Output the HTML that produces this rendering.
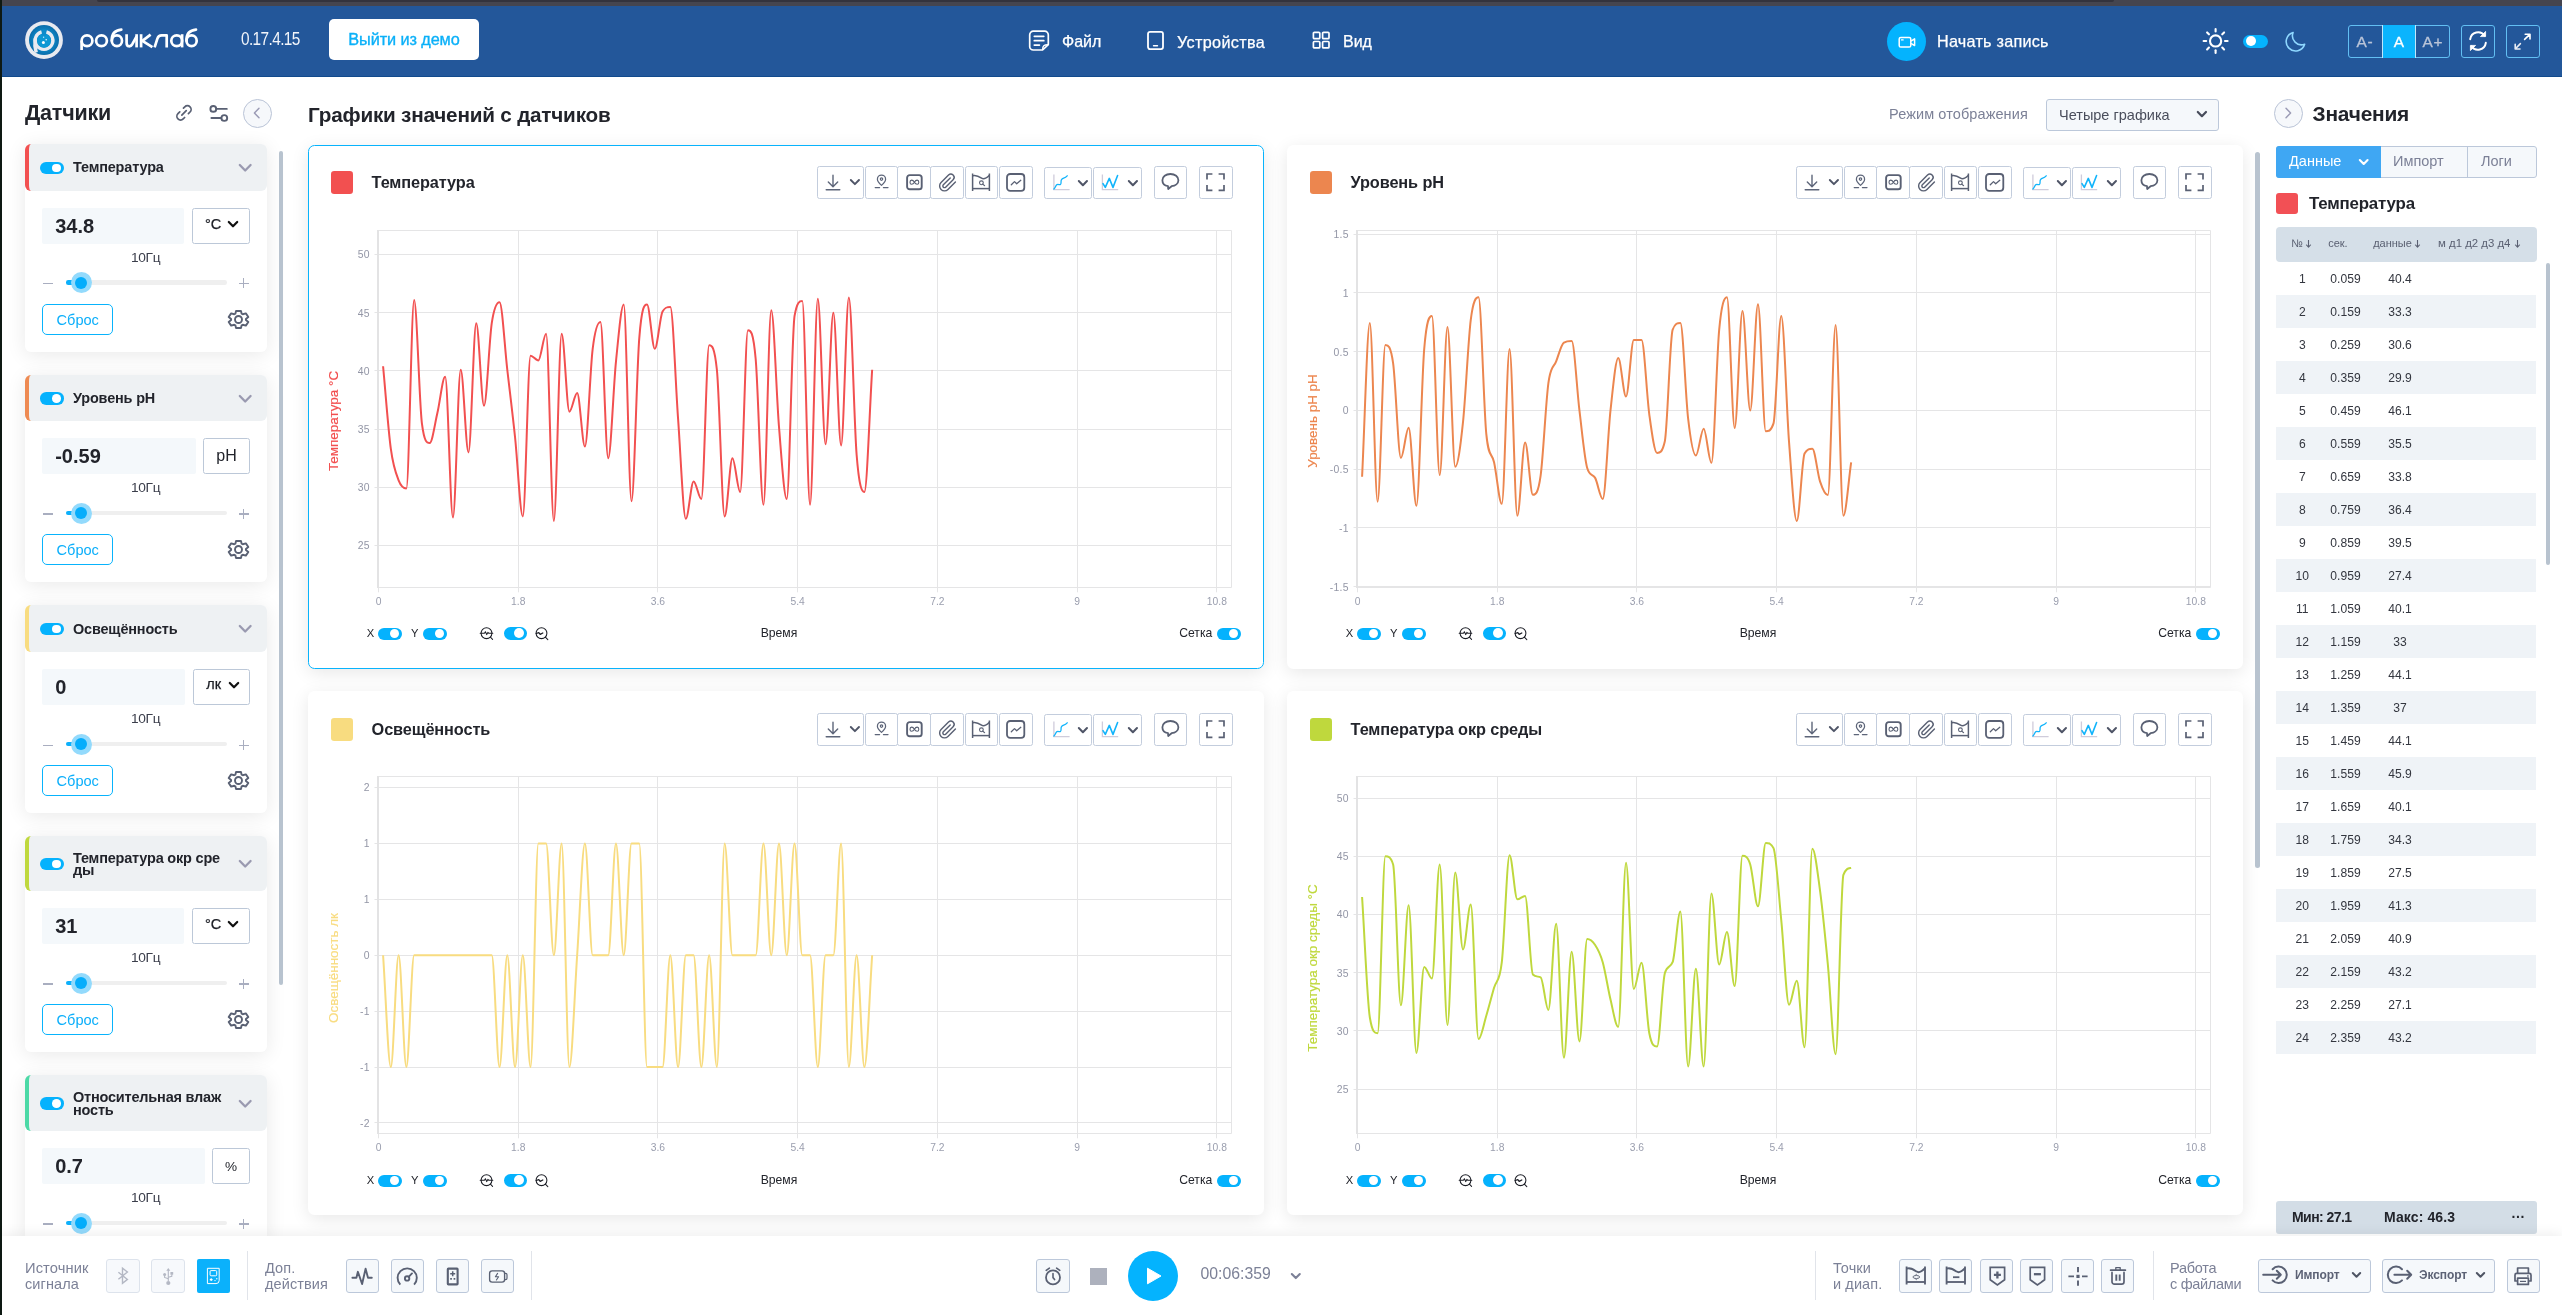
<!DOCTYPE html><html lang="ru"><head><meta charset="utf-8"><title>Робиклаб</title>
<style>

html,body{margin:0;padding:0;overflow:hidden;}
html{width:2562px;height:1315px;}
body{width:2562px;height:1315px;position:relative;overflow:hidden;background:#fff;font-family:"Liberation Sans", sans-serif;color:#22242b;}
div{box-sizing:border-box;}
.btn{position:absolute;background:#f5f8fb;border:1px solid #bcc8da;border-radius:3px;}
.tb{background:#fff;border-color:#c3cddd;border-radius:2.5px;}
.card{position:absolute;background:#fff;border-radius:6.5px;box-shadow:0 4px 18px rgba(0,0,0,0.095);}

</style></head><body><div id="root" style="position:absolute;left:0;top:0;width:2562px;height:1315px;overflow:hidden;will-change:transform;">
<div style="position:absolute;left:0px;top:0px;width:2562px;height:6px;background:#45454f;"></div>
<div style="position:absolute;left:97px;top:0px;width:2017px;height:2px;background:#33333d;border-radius:0 0 6px 6px;"></div>
<div style="position:absolute;left:0px;top:0px;width:2px;height:1315px;background:#0e1913;"></div>
<div style="position:absolute;left:2px;top:6px;width:2560px;height:71px;background:#23579a;border-bottom:1px solid #114a8c;"></div>
<svg style="position:absolute;left:25px;top:21px;overflow:visible" width="38" height="38" viewBox="0 0 38 38" fill="none"><defs><radialGradient id="lg" cx="50%" cy="50%" r="50%"><stop offset="0.55" stop-color="#0d8ccb"/><stop offset="1" stop-color="#0a6dab"/></radialGradient></defs><circle cx="19" cy="19.1" r="18.9" fill="#e8eaf0"/><circle cx="19" cy="19.1" r="15" fill="url(#lg)"/><path d="M21.45 10.84 A8.9 8.9 0 1 1 16.55 10.84" stroke="#e8eaf0" stroke-width="3.3" fill="none"/><path d="M10.3 17.5 C9.6 22 9.8 27 11.2 31.6" stroke="#e8eaf0" stroke-width="3.5" fill="none"/><circle cx="19" cy="19.9" r="6.9" fill="#0e98d4"/><rect x="17.2" y="8.6" width="3.6" height="6" fill="#0d8ccb"/><circle cx="18.4" cy="21.6" r="1.5" fill="#fff"/><circle cx="21.2" cy="18.8" r="0.8" fill="#e6f6ff"/><circle cx="18.6" cy="16.2" r="0.7" fill="#bfe6fb"/></svg>
<svg style="position:absolute;left:76px;top:24px;overflow:visible" width="128" height="32" viewBox="0 0 128 32" fill="none"><g stroke="#fff" stroke-width="2.7" fill="none"><ellipse cx="11.0" cy="16.75" rx="5.4" ry="5.4"/><path d="M5.6 16.75 V26" stroke-linecap="butt"/><ellipse cx="25.5" cy="16.75" rx="5.4" ry="5.4"/><ellipse cx="40.9" cy="16.75" rx="5.1" ry="5.4"/><path d="M35.8 16.75 C35.6 9.5 38.5 6.2 45.3 5.6" stroke-linecap="round"/><path d="M50.6 10.2 V18.8 C50.6 23.4 54.6 23 56.3 20.2 L60.6 12.5" stroke-linejoin="round"/><path d="M60.6 10.2 V23.4"/><path d="M65.1 10.2 V23.4"/><path d="M74.6 10.6 L66.4 16.8 L76.4 23.2" stroke-linejoin="round"/><path d="M78.6 23.4 L81.4 14.6 C82.3 12 83.4 11.4 85.6 11.4 H90.7 V23.4" stroke-linejoin="round"/><ellipse cx="100.7" cy="16.75" rx="5.4" ry="5.4"/><path d="M106.1 10.2 V23.4"/><ellipse cx="115.6" cy="16.75" rx="5.1" ry="5.4"/><path d="M110.5 16.75 C110.3 9.5 113.2 6.2 120 5.6" stroke-linecap="round"/></g></svg>
<div style="position:absolute;top:25.9px;height:26px;line-height:26px;font-size:17.6px;font-weight:400;color:#f2f5fa;white-space:nowrap;letter-spacing:-0.7px;left:241px;transform:scaleX(0.875);transform-origin:left center;">0.17.4.15</div>
<div style="position:absolute;left:329px;top:19px;width:150px;height:41px;background:#fff;border-radius:5px;"></div>
<div style="position:absolute;top:27.2px;height:24px;line-height:24px;font-size:16.3px;font-weight:400;color:#0bb0f8;white-space:nowrap;letter-spacing:-0.1px;left:-96px;width:1000px;text-align:center;-webkit-text-stroke:0.35px #0bb0f8;">Выйти из демо</div>
<svg style="position:absolute;left:1028px;top:29px;overflow:visible" width="22" height="23" viewBox="0 0 22 23" fill="none"><path d="M5.3 2.2 H16.7 A3.6 3.6 0 0 1 20.3 5.8 V15.6 L14.6 21 H5.3 A3.6 3.6 0 0 1 1.7 17.4 V5.8 A3.6 3.6 0 0 1 5.3 2.2 Z" stroke="#fff" stroke-width="1.7" stroke-linejoin="round"/><path d="M20.2 15.7 C16 15.6 14.6 17 14.7 20.8" stroke="#fff" stroke-width="1.5"/><path d="M6.3 7.3 H15.8 M6.3 11.7 H15.8 M6.3 16.1 H11.4" stroke="#fff" stroke-width="1.7" stroke-linecap="round"/></svg>
<div style="position:absolute;top:30.0px;height:24px;line-height:24px;font-size:16px;font-weight:400;color:#fff;white-space:nowrap;left:1062px;-webkit-text-stroke:0.25px #fff;">Файл</div>
<svg style="position:absolute;left:1145px;top:29px;overflow:visible" width="21" height="23" viewBox="0 0 21 23" fill="none"><rect x="3" y="2.9" width="15" height="17.2" rx="2" stroke="#fff" stroke-width="1.8"/><path d="M8.5 16.8 H12.5" stroke="#fff" stroke-width="1.4" stroke-linecap="round"/></svg>
<div style="position:absolute;top:30.0px;height:24px;line-height:24px;font-size:16.2px;font-weight:400;color:#fff;white-space:nowrap;letter-spacing:0.35px;left:1177px;-webkit-text-stroke:0.25px #fff;">Устройства</div>
<svg style="position:absolute;left:1311px;top:30px;overflow:visible" width="21" height="21" viewBox="0 0 21 21" fill="none"><rect x="2.4" y="2.3" width="6.4" height="6.4" rx="1" stroke="#fff" stroke-width="1.7"/><rect x="11.6" y="2.3" width="6.4" height="6.4" rx="1" stroke="#fff" stroke-width="1.7"/><rect x="2.4" y="11.5" width="6.4" height="6.4" rx="1" stroke="#fff" stroke-width="1.7"/><rect x="11.6" y="11.5" width="6.4" height="6.4" rx="1" stroke="#fff" stroke-width="1.7"/></svg>
<div style="position:absolute;top:30.0px;height:24px;line-height:24px;font-size:16px;font-weight:400;color:#fff;white-space:nowrap;left:1343px;-webkit-text-stroke:0.25px #fff;">Вид</div>
<div style="position:absolute;left:1886.8px;top:21.9px;width:39px;height:39px;background:#04b3fe;border-radius:50%;"></div>
<svg style="position:absolute;left:1898.4px;top:34.5px;overflow:visible" width="18" height="14" viewBox="0 0 18 14" fill="none"><rect x="1.2" y="2.4" width="11.6" height="9.6" rx="1.6" stroke="#fff" stroke-width="1.5"/><path d="M13 6.2 L16.6 3.9 V10.6 L13 8.3" stroke="#fff" stroke-width="1.5" stroke-linejoin="round"/><path d="M3.4 4.9 H5.2" stroke="#fff" stroke-width="1.1" stroke-linecap="round"/></svg>
<div style="position:absolute;top:29.4px;height:24px;line-height:24px;font-size:16.2px;font-weight:400;color:#fff;white-space:nowrap;letter-spacing:0.25px;left:1937px;-webkit-text-stroke:0.25px #fff;">Начать запись</div>
<svg style="position:absolute;left:2202px;top:28px;overflow:visible" width="27" height="27" viewBox="0 0 27 27" fill="none"><circle cx="13.6" cy="12.95" r="5.6" stroke="#fff" stroke-width="2.1"/><path d="M23.00 12.95 L25.60 12.95" stroke="#fff" stroke-width="2.1" stroke-linecap="round"/><path d="M20.25 19.60 L22.09 21.44" stroke="#fff" stroke-width="2.1" stroke-linecap="round"/><path d="M13.60 22.35 L13.60 24.95" stroke="#fff" stroke-width="2.1" stroke-linecap="round"/><path d="M6.95 19.60 L5.11 21.44" stroke="#fff" stroke-width="2.1" stroke-linecap="round"/><path d="M4.20 12.95 L1.60 12.95" stroke="#fff" stroke-width="2.1" stroke-linecap="round"/><path d="M6.95 6.30 L5.11 4.46" stroke="#fff" stroke-width="2.1" stroke-linecap="round"/><path d="M13.60 3.55 L13.60 0.95" stroke="#fff" stroke-width="2.1" stroke-linecap="round"/><path d="M20.25 6.30 L22.09 4.46" stroke="#fff" stroke-width="2.1" stroke-linecap="round"/></svg>
<div style="position:absolute;left:2243px;top:34.6px;width:25.2px;height:13.4px;border-radius:6.7px;background:#05b3fe;"><div style="position:absolute;left:3px;top:1.8px;width:9.8px;height:9.8px;border-radius:50%;background:#fff"></div></div>
<svg style="position:absolute;left:2285.7999999999997px;top:30.5px;overflow:visible" width="20.5" height="22.4" viewBox="0 0 22 24" fill="none"><path d="M7.6 1.6 A10.1 10.1 0 1 0 20 14.2 A9.7 9.7 0 0 1 7.6 1.6 Z" stroke="#8fd8ff" stroke-width="1.7" stroke-linejoin="round"/></svg>
<div style="position:absolute;left:2348px;top:25px;width:102px;height:33px;border:1px solid #62bff3;border-radius:3px;"></div>
<div style="position:absolute;left:2382px;top:25px;width:34px;height:33px;background:#0bb4fd;border-left:1px solid #bfe6fb;border-right:1px solid #bfe6fb;"></div>
<div style="position:absolute;top:30.3px;height:23px;line-height:23px;font-size:15.4px;font-weight:400;color:#b9c4d8;white-space:nowrap;letter-spacing:0.7px;left:1865px;width:1000px;text-align:center;-webkit-text-stroke:0.3px #b9c4d8;">A-</div>
<div style="position:absolute;top:30.3px;height:23px;line-height:23px;font-size:15.4px;font-weight:400;color:#fff;white-space:nowrap;left:1898.8000000000002px;width:1000px;text-align:center;-webkit-text-stroke:0.3px #fff;">A</div>
<div style="position:absolute;top:30.3px;height:23px;line-height:23px;font-size:15.4px;font-weight:400;color:#b9c4d8;white-space:nowrap;letter-spacing:0.7px;left:1932.8000000000002px;width:1000px;text-align:center;-webkit-text-stroke:0.3px #b9c4d8;">A+</div>
<div style="position:absolute;left:2461px;top:25px;width:34px;height:33px;border:1px solid #62bff3;border-radius:3px;"></div>
<svg style="position:absolute;left:2467px;top:30px;overflow:visible" width="22" height="22" viewBox="0 0 22 22" fill="none"><path d="M3.2 9.2 A8 8 0 0 1 17.6 5.6" stroke="#fff" stroke-width="2" stroke-linecap="round"/><path d="M18.6 1.4 V6.6 H13.4 Z" fill="#fff" stroke="#fff" stroke-width="0.8" stroke-linejoin="round"/><path d="M18.8 12.8 A8 8 0 0 1 4.4 16.4" stroke="#fff" stroke-width="2" stroke-linecap="round"/><path d="M3.4 20.6 V15.4 H8.6 Z" fill="#fff" stroke="#fff" stroke-width="0.8" stroke-linejoin="round"/></svg>
<div style="position:absolute;left:2506px;top:25px;width:34px;height:33px;border:1px solid #62bff3;border-radius:3px;"></div>
<svg style="position:absolute;left:2514px;top:33px;overflow:visible" width="17" height="17" viewBox="0 0 17 17" fill="none"><path d="M10.6 6.4 L15.8 1.4 M11.2 1.2 H16 V6" stroke="#fff" stroke-width="1.6" stroke-linecap="round" stroke-linejoin="round"/><path d="M6.4 10.6 L1.4 15.8 M1.2 11.2 V16 H6" stroke="#e8ecf4" stroke-width="1.6" stroke-linecap="round" stroke-linejoin="round"/></svg>
<div style="position:absolute;top:97.0px;height:32px;line-height:32px;font-size:21.5px;font-weight:700;color:#22242b;white-space:nowrap;letter-spacing:-0.2px;left:25px;">Датчики</div>
<svg style="position:absolute;left:175.2px;top:104.0px;overflow:visible" width="18" height="18" viewBox="0 0 20 20" fill="none"><g stroke="#596073" stroke-width="1.9" stroke-linecap="round" fill="none"><path d="M9.4 4.6 L10.9 3.1 A4.1 4.1 0 0 1 16.7 8.9 L14.9 10.7"/><path d="M10.7 15 L9.1 16.6 A4.1 4.1 0 0 1 3.3 10.8 L5.3 8.8"/><path d="M7.6 12.3 L12.5 7.4"/></g></svg>
<svg style="position:absolute;left:208px;top:103px;overflow:visible" width="22" height="20" viewBox="0 0 22 20" fill="none"><g stroke="#596073" stroke-width="1.9" stroke-linecap="round" fill="none"><circle cx="5.3" cy="5.9" r="2.9"/><path d="M8.3 5.9 H18.8"/><circle cx="16.3" cy="15" r="2.9"/><path d="M3.4 15 H13.3"/></g></svg>
<div style="position:absolute;left:243px;top:98.8px;width:29px;height:29px;border-radius:50%;border:1px solid #b9c3d6;background:#f6f8fb;"></div>
<svg style="position:absolute;left:249px;top:105px;" width="16" height="16" viewBox="0 0 16 16" fill="none"><path d="M10 3.2 L5.4 8 L10 12.8" stroke="#9c9cb6" stroke-width="1.5" stroke-linecap="round" stroke-linejoin="round"/></svg>
<div style="position:absolute;top:100.0px;height:30px;line-height:30px;font-size:20.7px;font-weight:700;color:#22242b;white-space:nowrap;letter-spacing:-0.2px;left:308px;">Графики значений с датчиков</div>
<div style="position:absolute;top:103.0px;height:22px;line-height:22px;font-size:14.5px;font-weight:400;color:#7c8197;white-space:nowrap;letter-spacing:0.1px;left:1889px;">Режим отображения</div>
<div class="btn" style="left:2046px;top:99px;width:173px;height:32px;"></div>
<div style="position:absolute;top:103.5px;height:22px;line-height:22px;font-size:14.5px;font-weight:400;color:#4a4e5c;white-space:nowrap;left:2059px;">Четыре графика</div>
<svg style="position:absolute;left:2197.2px;top:111.3px;overflow:visible" width="9.8" height="6.9" viewBox="0 0 9.8 6.9" fill="none"><path d="M0.8 1 L4.90 5.20 L9.00 1" stroke="#474c5b" stroke-width="2.2" stroke-linecap="round" stroke-linejoin="round"/></svg>
<div style="position:absolute;left:2273.7px;top:98.8px;width:29px;height:29px;border-radius:50%;border:1px solid #b9c3d6;background:#f6f8fb;"></div>
<svg style="position:absolute;left:2280px;top:105px;" width="16" height="16" viewBox="0 0 16 16" fill="none"><path d="M6 3.2 L10.6 8 L6 12.8" stroke="#9c9cb6" stroke-width="1.5" stroke-linecap="round" stroke-linejoin="round"/></svg>
<div style="position:absolute;top:97.5px;height:31px;line-height:31px;font-size:20.9px;font-weight:700;color:#22242b;white-space:nowrap;letter-spacing:-0.2px;left:2312.5px;">Значения</div>
<div style="position:absolute;left:2px;top:76px;width:300px;height:1160px;overflow:hidden;"><div style="position:absolute;left:-2px;top:-76px;">
<div class="card" style="left:25px;top:144px;width:242px;height:207.5px;border-radius:6px;box-shadow:0 3px 20px rgba(0,0,0,0.09);"></div><div style="position:absolute;left:25px;top:144px;width:242px;height:46.7px;border-radius:6px;background:#eef1f3;border-left:4px solid #f25050;"></div><div style="position:absolute;left:40px;top:161.65px;width:24px;height:12.5px;border-radius:6.25px;background:#05b2fd;"><div style="position:absolute;right:3.0px;top:1.9px;width:8.7px;height:8.7px;border-radius:50%;background:#fff;"></div></div><div style="position:absolute;top:156.3px;height:22px;line-height:22px;font-size:14.45px;font-weight:700;color:#22242b;white-space:nowrap;letter-spacing:-0.15px;left:73px;">Температура</div><svg style="position:absolute;left:239.0px;top:164.15px;overflow:visible" width="12.4" height="8.2" viewBox="0 0 12.4 8.2" fill="none"><path d="M0.8 1 L6.20 6.50 L11.60 1" stroke="#9a9ab0" stroke-width="2.3" stroke-linecap="round" stroke-linejoin="round"/></svg><div style="position:absolute;left:42px;top:208.1px;width:142px;height:35.6px;background:#f4f8fb;border-radius:2px;"></div><div style="position:absolute;top:210.7px;height:30px;line-height:30px;font-size:20px;font-weight:700;color:#22242b;white-space:nowrap;left:55.2px;">34.8</div><div style="position:absolute;left:192px;top:208.1px;width:58px;height:35.6px;background:#fff;border:1px solid #bcc8d8;border-radius:2.5px;"></div><div style="position:absolute;top:212.5px;height:22px;line-height:22px;font-size:14.5px;font-weight:400;color:#1c1e25;white-space:nowrap;left:205px;-webkit-text-stroke:0.25px #1c1e25;">°C</div><svg style="position:absolute;left:228px;top:221.1px;overflow:visible" width="10" height="7.0" viewBox="0 0 10 7.0" fill="none"><path d="M0.8 1 L5.00 5.30 L9.20 1" stroke="#111" stroke-width="2.2" stroke-linecap="round" stroke-linejoin="round"/></svg><div style="position:absolute;top:246.9px;height:21px;line-height:21px;font-size:13.7px;font-weight:400;color:#3b3e4b;white-space:nowrap;letter-spacing:-0.3px;left:-354.4px;width:1000px;text-align:center;">10Гц</div><div style="position:absolute;left:42.8px;top:282.7px;width:10px;height:1.3px;background:#a9aec0;"></div><div style="position:absolute;left:238.6px;top:282.7px;width:10.3px;height:1.3px;background:#a9aec0;"></div><div style="position:absolute;left:243.1px;top:277.9px;width:1.3px;height:10.5px;background:#a9aec0;"></div><div style="position:absolute;left:66px;top:280.09999999999997px;width:161px;height:4.6px;background:#efefef;border-radius:2.3px;"></div><div style="position:absolute;left:66px;top:280.09999999999997px;width:15px;height:4.6px;background:#0bb0fc;border-radius:2.3px;"></div><div style="position:absolute;left:70.5px;top:272.09999999999997px;width:21px;height:21px;background:#93dafc;border-radius:50%;"></div><div style="position:absolute;left:75px;top:276.59999999999997px;width:12px;height:12px;background:#05adfb;border-radius:50%;"></div><div style="position:absolute;left:42px;top:304.3px;width:71px;height:31px;border:1.3px solid #08b3fc;border-radius:5px;background:#fff;"></div><div style="position:absolute;top:309.0px;height:22px;line-height:22px;font-size:14.6px;font-weight:400;color:#0aaefa;white-space:nowrap;left:-422.3px;width:1000px;text-align:center;">Сброс</div><svg style="position:absolute;left:226.9px;top:307.90000000000003px;overflow:visible" width="23" height="23" viewBox="0 0 23 23" fill="none"><path d="M14.64 5.70 L13.97 2.96 L9.03 2.96 L8.36 5.70 L7.24 6.26 L4.16 5.39 L1.69 9.07 L4.10 10.94 L4.10 12.06 L1.69 13.93 L4.16 17.61 L7.24 16.74 L8.36 17.30 L9.03 20.04 L13.97 20.04 L14.64 17.30 L15.76 16.74 L18.84 17.61 L21.31 13.93 L18.90 12.06 L18.90 10.94 L21.31 9.07 L18.84 5.39 L15.76 6.26 Z" stroke="#596073" stroke-width="1.9" stroke-linejoin="round"/><circle cx="11.5" cy="11.5" r="3.5" stroke="#596073" stroke-width="1.9"/></svg>
<div class="card" style="left:25px;top:374.6px;width:242px;height:207.5px;border-radius:6px;box-shadow:0 3px 20px rgba(0,0,0,0.09);"></div><div style="position:absolute;left:25px;top:374.6px;width:242px;height:46.7px;border-radius:6px;background:#eef1f3;border-left:4px solid #ee8a52;"></div><div style="position:absolute;left:40px;top:392.25000000000006px;width:24px;height:12.5px;border-radius:6.25px;background:#05b2fd;"><div style="position:absolute;right:3.0px;top:1.9px;width:8.7px;height:8.7px;border-radius:50%;background:#fff;"></div></div><div style="position:absolute;top:387.0px;height:22px;line-height:22px;font-size:14.45px;font-weight:700;color:#22242b;white-space:nowrap;letter-spacing:-0.15px;left:73px;">Уровень pH</div><svg style="position:absolute;left:239.0px;top:394.75000000000006px;overflow:visible" width="12.4" height="8.2" viewBox="0 0 12.4 8.2" fill="none"><path d="M0.8 1 L6.20 6.50 L11.60 1" stroke="#9a9ab0" stroke-width="2.3" stroke-linecap="round" stroke-linejoin="round"/></svg><div style="position:absolute;left:42px;top:438.1px;width:153.5px;height:35.6px;background:#f4f8fb;border-radius:2px;"></div><div style="position:absolute;top:440.7px;height:30px;line-height:30px;font-size:20px;font-weight:700;color:#22242b;white-space:nowrap;left:55.2px;">-0.59</div><div style="position:absolute;left:203px;top:438.1px;width:47px;height:35.6px;background:#fff;border:1px solid #bcc8d8;border-radius:2.5px;"></div><div style="position:absolute;top:444.1px;height:24px;line-height:24px;font-size:16px;font-weight:400;color:#22242b;white-space:nowrap;left:-273.5px;width:1000px;text-align:center;">pH</div><div style="position:absolute;top:477.2px;height:21px;line-height:21px;font-size:13.7px;font-weight:400;color:#3b3e4b;white-space:nowrap;letter-spacing:-0.3px;left:-354.4px;width:1000px;text-align:center;">10Гц</div><div style="position:absolute;left:42.8px;top:513.4px;width:10px;height:1.3px;background:#a9aec0;"></div><div style="position:absolute;left:238.6px;top:513.4px;width:10.3px;height:1.3px;background:#a9aec0;"></div><div style="position:absolute;left:243.1px;top:508.6px;width:1.3px;height:10.5px;background:#a9aec0;"></div><div style="position:absolute;left:66px;top:510.8px;width:161px;height:4.6px;background:#efefef;border-radius:2.3px;"></div><div style="position:absolute;left:66px;top:510.8px;width:15px;height:4.6px;background:#0bb0fc;border-radius:2.3px;"></div><div style="position:absolute;left:70.5px;top:502.8px;width:21px;height:21px;background:#93dafc;border-radius:50%;"></div><div style="position:absolute;left:75px;top:507.3px;width:12px;height:12px;background:#05adfb;border-radius:50%;"></div><div style="position:absolute;left:42px;top:534.3000000000001px;width:71px;height:31px;border:1.3px solid #08b3fc;border-radius:5px;background:#fff;"></div><div style="position:absolute;top:539.0px;height:22px;line-height:22px;font-size:14.6px;font-weight:400;color:#0aaefa;white-space:nowrap;left:-422.3px;width:1000px;text-align:center;">Сброс</div><svg style="position:absolute;left:226.9px;top:537.9000000000001px;overflow:visible" width="23" height="23" viewBox="0 0 23 23" fill="none"><path d="M14.64 5.70 L13.97 2.96 L9.03 2.96 L8.36 5.70 L7.24 6.26 L4.16 5.39 L1.69 9.07 L4.10 10.94 L4.10 12.06 L1.69 13.93 L4.16 17.61 L7.24 16.74 L8.36 17.30 L9.03 20.04 L13.97 20.04 L14.64 17.30 L15.76 16.74 L18.84 17.61 L21.31 13.93 L18.90 12.06 L18.90 10.94 L21.31 9.07 L18.84 5.39 L15.76 6.26 Z" stroke="#596073" stroke-width="1.9" stroke-linejoin="round"/><circle cx="11.5" cy="11.5" r="3.5" stroke="#596073" stroke-width="1.9"/></svg>
<div class="card" style="left:25px;top:605.2px;width:242px;height:207.5px;border-radius:6px;box-shadow:0 3px 20px rgba(0,0,0,0.09);"></div><div style="position:absolute;left:25px;top:605.2px;width:242px;height:46.7px;border-radius:6px;background:#eef1f3;border-left:4px solid #f8dc80;"></div><div style="position:absolute;left:40px;top:622.85px;width:24px;height:12.5px;border-radius:6.25px;background:#05b2fd;"><div style="position:absolute;right:3.0px;top:1.9px;width:8.7px;height:8.7px;border-radius:50%;background:#fff;"></div></div><div style="position:absolute;top:617.6px;height:22px;line-height:22px;font-size:14.45px;font-weight:700;color:#22242b;white-space:nowrap;letter-spacing:-0.15px;left:73px;">Освещённость</div><svg style="position:absolute;left:239.0px;top:625.35px;overflow:visible" width="12.4" height="8.2" viewBox="0 0 12.4 8.2" fill="none"><path d="M0.8 1 L6.20 6.50 L11.60 1" stroke="#9a9ab0" stroke-width="2.3" stroke-linecap="round" stroke-linejoin="round"/></svg><div style="position:absolute;left:42px;top:669px;width:143px;height:35.6px;background:#f4f8fb;border-radius:2px;"></div><div style="position:absolute;top:671.6px;height:30px;line-height:30px;font-size:20px;font-weight:700;color:#22242b;white-space:nowrap;left:55.2px;">0</div><div style="position:absolute;left:193.3px;top:669px;width:56.7px;height:35.6px;background:#fff;border:1px solid #bcc8d8;border-radius:2.5px;"></div><div style="position:absolute;top:673.4px;height:22px;line-height:22px;font-size:14.5px;font-weight:400;color:#1c1e25;white-space:nowrap;left:206.3px;-webkit-text-stroke:0.25px #1c1e25;">лк</div><svg style="position:absolute;left:229.3px;top:682px;overflow:visible" width="10" height="7.0" viewBox="0 0 10 7.0" fill="none"><path d="M0.8 1 L5.00 5.30 L9.20 1" stroke="#111" stroke-width="2.2" stroke-linecap="round" stroke-linejoin="round"/></svg><div style="position:absolute;top:708.3px;height:21px;line-height:21px;font-size:13.7px;font-weight:400;color:#3b3e4b;white-space:nowrap;letter-spacing:-0.3px;left:-354.4px;width:1000px;text-align:center;">10Гц</div><div style="position:absolute;left:42.8px;top:744.4999999999999px;width:10px;height:1.3px;background:#a9aec0;"></div><div style="position:absolute;left:238.6px;top:744.4999999999999px;width:10.3px;height:1.3px;background:#a9aec0;"></div><div style="position:absolute;left:243.1px;top:739.6999999999999px;width:1.3px;height:10.5px;background:#a9aec0;"></div><div style="position:absolute;left:66px;top:741.9px;width:161px;height:4.6px;background:#efefef;border-radius:2.3px;"></div><div style="position:absolute;left:66px;top:741.9px;width:15px;height:4.6px;background:#0bb0fc;border-radius:2.3px;"></div><div style="position:absolute;left:70.5px;top:733.9px;width:21px;height:21px;background:#93dafc;border-radius:50%;"></div><div style="position:absolute;left:75px;top:738.4px;width:12px;height:12px;background:#05adfb;border-radius:50%;"></div><div style="position:absolute;left:42px;top:765.2px;width:71px;height:31px;border:1.3px solid #08b3fc;border-radius:5px;background:#fff;"></div><div style="position:absolute;top:769.9px;height:22px;line-height:22px;font-size:14.6px;font-weight:400;color:#0aaefa;white-space:nowrap;left:-422.3px;width:1000px;text-align:center;">Сброс</div><svg style="position:absolute;left:226.9px;top:768.8000000000001px;overflow:visible" width="23" height="23" viewBox="0 0 23 23" fill="none"><path d="M14.64 5.70 L13.97 2.96 L9.03 2.96 L8.36 5.70 L7.24 6.26 L4.16 5.39 L1.69 9.07 L4.10 10.94 L4.10 12.06 L1.69 13.93 L4.16 17.61 L7.24 16.74 L8.36 17.30 L9.03 20.04 L13.97 20.04 L14.64 17.30 L15.76 16.74 L18.84 17.61 L21.31 13.93 L18.90 12.06 L18.90 10.94 L21.31 9.07 L18.84 5.39 L15.76 6.26 Z" stroke="#596073" stroke-width="1.9" stroke-linejoin="round"/><circle cx="11.5" cy="11.5" r="3.5" stroke="#596073" stroke-width="1.9"/></svg>
<div class="card" style="left:25px;top:835.8px;width:242px;height:216.5px;border-radius:6px;box-shadow:0 3px 20px rgba(0,0,0,0.09);"></div><div style="position:absolute;left:25px;top:835.8px;width:242px;height:55.5px;border-radius:6px;background:#eef1f3;border-left:4px solid #bfd83d;"></div><div style="position:absolute;left:40px;top:857.8499999999999px;width:24px;height:12.5px;border-radius:6.25px;background:#05b2fd;"><div style="position:absolute;right:3.0px;top:1.9px;width:8.7px;height:8.7px;border-radius:50%;background:#fff;"></div></div><div style="position:absolute;top:846.6px;height:22px;line-height:22px;font-size:14.5px;font-weight:700;color:#22242b;white-space:nowrap;letter-spacing:-0.2px;left:73px;">Температура окр сре</div><div style="position:absolute;top:859.1px;height:22px;line-height:22px;font-size:14.5px;font-weight:700;color:#22242b;white-space:nowrap;letter-spacing:-0.2px;left:73px;">ды</div><svg style="position:absolute;left:239.0px;top:860.3499999999999px;overflow:visible" width="12.4" height="8.2" viewBox="0 0 12.4 8.2" fill="none"><path d="M0.8 1 L6.20 6.50 L11.60 1" stroke="#9a9ab0" stroke-width="2.3" stroke-linecap="round" stroke-linejoin="round"/></svg><div style="position:absolute;left:42px;top:908.2px;width:142px;height:35.6px;background:#f4f8fb;border-radius:2px;"></div><div style="position:absolute;top:910.8px;height:30px;line-height:30px;font-size:20px;font-weight:700;color:#22242b;white-space:nowrap;left:55.2px;">31</div><div style="position:absolute;left:192px;top:908.2px;width:58px;height:35.6px;background:#fff;border:1px solid #bcc8d8;border-radius:2.5px;"></div><div style="position:absolute;top:912.6px;height:22px;line-height:22px;font-size:14.5px;font-weight:400;color:#1c1e25;white-space:nowrap;left:205px;-webkit-text-stroke:0.25px #1c1e25;">°C</div><svg style="position:absolute;left:228px;top:921.2px;overflow:visible" width="10" height="7.0" viewBox="0 0 10 7.0" fill="none"><path d="M0.8 1 L5.00 5.30 L9.20 1" stroke="#111" stroke-width="2.2" stroke-linecap="round" stroke-linejoin="round"/></svg><div style="position:absolute;top:947.3px;height:21px;line-height:21px;font-size:13.7px;font-weight:400;color:#3b3e4b;white-space:nowrap;letter-spacing:-0.3px;left:-354.4px;width:1000px;text-align:center;">10Гц</div><div style="position:absolute;left:42.8px;top:983.4px;width:10px;height:1.3px;background:#a9aec0;"></div><div style="position:absolute;left:238.6px;top:983.4px;width:10.3px;height:1.3px;background:#a9aec0;"></div><div style="position:absolute;left:243.1px;top:978.6px;width:1.3px;height:10.5px;background:#a9aec0;"></div><div style="position:absolute;left:66px;top:980.8000000000001px;width:161px;height:4.6px;background:#efefef;border-radius:2.3px;"></div><div style="position:absolute;left:66px;top:980.8000000000001px;width:15px;height:4.6px;background:#0bb0fc;border-radius:2.3px;"></div><div style="position:absolute;left:70.5px;top:972.8000000000001px;width:21px;height:21px;background:#93dafc;border-radius:50%;"></div><div style="position:absolute;left:75px;top:977.3000000000001px;width:12px;height:12px;background:#05adfb;border-radius:50%;"></div><div style="position:absolute;left:42px;top:1004.4000000000001px;width:71px;height:31px;border:1.3px solid #08b3fc;border-radius:5px;background:#fff;"></div><div style="position:absolute;top:1009.1px;height:22px;line-height:22px;font-size:14.6px;font-weight:400;color:#0aaefa;white-space:nowrap;left:-422.3px;width:1000px;text-align:center;">Сброс</div><svg style="position:absolute;left:226.9px;top:1008.0000000000001px;overflow:visible" width="23" height="23" viewBox="0 0 23 23" fill="none"><path d="M14.64 5.70 L13.97 2.96 L9.03 2.96 L8.36 5.70 L7.24 6.26 L4.16 5.39 L1.69 9.07 L4.10 10.94 L4.10 12.06 L1.69 13.93 L4.16 17.61 L7.24 16.74 L8.36 17.30 L9.03 20.04 L13.97 20.04 L14.64 17.30 L15.76 16.74 L18.84 17.61 L21.31 13.93 L18.90 12.06 L18.90 10.94 L21.31 9.07 L18.84 5.39 L15.76 6.26 Z" stroke="#596073" stroke-width="1.9" stroke-linejoin="round"/><circle cx="11.5" cy="11.5" r="3.5" stroke="#596073" stroke-width="1.9"/></svg>
<div class="card" style="left:25px;top:1075.2px;width:242px;height:164.79999999999995px;border-radius:6px;box-shadow:0 3px 20px rgba(0,0,0,0.09);border-bottom-left-radius:0;border-bottom-right-radius:0;"></div><div style="position:absolute;left:25px;top:1075.2px;width:242px;height:55.5px;border-radius:6px;background:#eef1f3;border-left:4px solid #4cd9a6;"></div><div style="position:absolute;left:40px;top:1097.25px;width:24px;height:12.5px;border-radius:6.25px;background:#05b2fd;"><div style="position:absolute;right:3.0px;top:1.9px;width:8.7px;height:8.7px;border-radius:50%;background:#fff;"></div></div><div style="position:absolute;top:1086.0px;height:22px;line-height:22px;font-size:14.5px;font-weight:700;color:#22242b;white-space:nowrap;letter-spacing:-0.2px;left:73px;">Относительная влаж</div><div style="position:absolute;top:1098.5px;height:22px;line-height:22px;font-size:14.5px;font-weight:700;color:#22242b;white-space:nowrap;letter-spacing:-0.2px;left:73px;">ность</div><svg style="position:absolute;left:239.0px;top:1099.75px;overflow:visible" width="12.4" height="8.2" viewBox="0 0 12.4 8.2" fill="none"><path d="M0.8 1 L6.20 6.50 L11.60 1" stroke="#9a9ab0" stroke-width="2.3" stroke-linecap="round" stroke-linejoin="round"/></svg><div style="position:absolute;left:42px;top:1148.1px;width:163px;height:35.6px;background:#f4f8fb;border-radius:2px;"></div><div style="position:absolute;top:1150.7px;height:30px;line-height:30px;font-size:20px;font-weight:700;color:#22242b;white-space:nowrap;left:55.2px;">0.7</div><div style="position:absolute;left:212px;top:1148.1px;width:38px;height:35.6px;background:#fff;border:1px solid #bcc8d8;border-radius:2.5px;"></div><div style="position:absolute;top:1156.4px;height:21px;line-height:21px;font-size:13.6px;font-weight:400;color:#22242b;white-space:nowrap;left:-269.0px;width:1000px;text-align:center;">%</div><div style="position:absolute;top:1187.2px;height:21px;line-height:21px;font-size:13.7px;font-weight:400;color:#3b3e4b;white-space:nowrap;letter-spacing:-0.3px;left:-354.4px;width:1000px;text-align:center;">10Гц</div><div style="position:absolute;left:42.8px;top:1223.2999999999997px;width:10px;height:1.3px;background:#a9aec0;"></div><div style="position:absolute;left:238.6px;top:1223.2999999999997px;width:10.3px;height:1.3px;background:#a9aec0;"></div><div style="position:absolute;left:243.1px;top:1218.4999999999998px;width:1.3px;height:10.5px;background:#a9aec0;"></div><div style="position:absolute;left:66px;top:1220.6999999999998px;width:161px;height:4.6px;background:#efefef;border-radius:2.3px;"></div><div style="position:absolute;left:66px;top:1220.6999999999998px;width:15px;height:4.6px;background:#0bb0fc;border-radius:2.3px;"></div><div style="position:absolute;left:70.5px;top:1212.6999999999998px;width:21px;height:21px;background:#93dafc;border-radius:50%;"></div><div style="position:absolute;left:75px;top:1217.1999999999998px;width:12px;height:12px;background:#05adfb;border-radius:50%;"></div><div style="position:absolute;left:42px;top:1244.3px;width:71px;height:31px;border:1.3px solid #08b3fc;border-radius:5px;background:#fff;"></div><div style="position:absolute;top:1249.0px;height:22px;line-height:22px;font-size:14.6px;font-weight:400;color:#0aaefa;white-space:nowrap;left:-422.3px;width:1000px;text-align:center;">Сброс</div><svg style="position:absolute;left:226.9px;top:1247.8999999999999px;overflow:visible" width="23" height="23" viewBox="0 0 23 23" fill="none"><path d="M14.64 5.70 L13.97 2.96 L9.03 2.96 L8.36 5.70 L7.24 6.26 L4.16 5.39 L1.69 9.07 L4.10 10.94 L4.10 12.06 L1.69 13.93 L4.16 17.61 L7.24 16.74 L8.36 17.30 L9.03 20.04 L13.97 20.04 L14.64 17.30 L15.76 16.74 L18.84 17.61 L21.31 13.93 L18.90 12.06 L18.90 10.94 L21.31 9.07 L18.84 5.39 L15.76 6.26 Z" stroke="#596073" stroke-width="1.9" stroke-linejoin="round"/><circle cx="11.5" cy="11.5" r="3.5" stroke="#596073" stroke-width="1.9"/></svg>
</div></div>
<div style="position:absolute;left:278.5px;top:151px;width:4.5px;height:834px;background:#b8c3cf;border-radius:2.5px;"></div>
<div class="card" style="left:308px;top:145px;width:956px;height:524px;"><div style="position:absolute;left:0;top:0;width:956px;height:524px;border:1.4px solid #08b3fc;border-radius:6.5px;height:524px;"></div><div style="position:absolute;left:23.1px;top:26.1px;width:22px;height:23px;border-radius:3.2px;background:#f25050;"></div><div style="position:absolute;top:24.6px;height:24px;line-height:24px;font-size:16.3px;font-weight:700;color:#22242b;white-space:nowrap;letter-spacing:-0.1px;left:63.6px;">Температура</div><div class="btn tb" style="left:509.3px;top:21.2px;width:47px;height:32.4px;"></div><div class="btn tb" style="left:557.3px;top:21.2px;width:33px;height:32.4px;"></div><div class="btn tb" style="left:589.3px;top:21.2px;width:34px;height:32.4px;"></div><div class="btn tb" style="left:622.3px;top:21.2px;width:34px;height:32.4px;"></div><div class="btn tb" style="left:657.3px;top:21.2px;width:33px;height:32.4px;"></div><div class="btn tb" style="left:691.3px;top:21.2px;width:33.5px;height:32.4px;"></div><div class="btn tb" style="left:736.3px;top:22.3px;width:48px;height:31.299999999999997px;"></div><div class="btn tb" style="left:785.3px;top:22.3px;width:49px;height:31.299999999999997px;"></div><div class="btn tb" style="left:845.8px;top:21.2px;width:33.5px;height:32.4px;"></div><div class="btn tb" style="left:891.3px;top:21.2px;width:33.5px;height:32.4px;"></div><svg style="position:absolute;left:516.6px;top:28.5px;overflow:visible" width="16" height="17" viewBox="0 0 16 17" fill="none"><g stroke="#5d6579" stroke-width="1.4" stroke-linecap="round" stroke-linejoin="round"><path d="M8 1.2 V12.6 M3.3 8 L8 12.7 L12.7 8 M1.2 15.8 H14.8"/></g></svg><svg style="position:absolute;left:542.2px;top:34.4px;overflow:visible" width="9.8" height="6.9" viewBox="0 0 9.8 6.9" fill="none"><path d="M0.8 1 L4.90 5.20 L9.00 1" stroke="#4f5567" stroke-width="1.9" stroke-linecap="round" stroke-linejoin="round"/></svg><svg style="position:absolute;left:566px;top:29.2px;overflow:visible" width="15" height="15" viewBox="0 0 15 15" fill="none"><g stroke="#5d6579" stroke-width="1.25" stroke-linecap="round" stroke-linejoin="round"><path d="M7.5 11.4 C4.6 8.8 3.4 7 3.4 5.2 A4.1 4.1 0 0 1 11.6 5.2 C11.6 7 10.4 8.8 7.5 11.4 Z"/><circle cx="7.5" cy="5.1" r="1.2"/><path d="M1.2 13.6 H5.6 M9.4 13.6 H14"/></g></svg><svg style="position:absolute;left:598.2px;top:29.1px;overflow:visible" width="17" height="17" viewBox="0 0 17 17" fill="none"><rect x="1.1" y="1.1" width="14.6" height="14.2" rx="2.6" stroke="#596073" stroke-width="1.9"/><path d="M8.4 8.2 C6.8 5.4 4 5.4 4 8.2 C4 11 6.8 11 8.4 8.2 C10 5.4 12.8 5.4 12.8 8.2 C12.8 11 10 11 8.4 8.2 Z" stroke="#596073" stroke-width="1.1"/></svg><svg style="position:absolute;left:630.1px;top:27.7px;overflow:visible" width="19.5" height="19.5" viewBox="0 0 24 24" fill="none"><path d="M21.44 11.05l-9.19 9.19a6 6 0 0 1-8.49-8.49l9.19-9.19a4 4 0 0 1 5.66 5.66l-9.2 9.19a2 2 0 0 1-2.83-2.83l8.49-8.48" stroke="#596073" stroke-width="1.75" stroke-linecap="round" stroke-linejoin="round" fill="none"/></svg><svg style="position:absolute;left:663.3px;top:27.9px;overflow:visible" width="20" height="19" viewBox="0 0 20 19" fill="none"><g stroke="#596073" stroke-width="1.5" fill="none" stroke-linecap="butt"><path d="M1.6 0.4 V18 M18.4 0.4 V18"/><path d="M1.6 2.8 C5 1.6 7.6 3.2 10.6 5.2 C12.6 6.4 15 5.6 18.4 2.2"/><path d="M1.6 15.6 H18.4"/></g><circle cx="10.4" cy="9.8" r="1.9" stroke="#596073" stroke-width="1.1"/><path d="M11.8 11.2 L13.6 12.6" stroke="#596073" stroke-width="1.2" stroke-linecap="round"/></svg><svg style="position:absolute;left:698.3px;top:27.8px;overflow:visible" width="20" height="20" viewBox="0 0 20 20" fill="none"><rect x="1.0" y="1.0" width="17.3" height="16.9" rx="3.2" stroke="#596073" stroke-width="1.8"/><path d="M5.3 11.8 L8.5 8.6 L10.7 10.8 L14.8 7.3" stroke="#596073" stroke-width="1.3" stroke-linecap="round" stroke-linejoin="round"/></svg><svg style="position:absolute;left:743.5px;top:28.8px;overflow:visible" width="18" height="17" viewBox="0 0 18 17" fill="none"><path d="M1.9 0.6 V15.6 H17.6" stroke="#cfccdb" stroke-width="1.3"/><path d="M1.9 15 C3.4 13.8 3.6 11.4 5 10.6 C6.6 9.8 7.4 11.4 8.6 10.2 C9.8 8.8 8.2 6.6 9.8 5.2 C11.4 3.8 12.8 4.6 15.2 1.8" stroke="#12b4fb" stroke-width="1.3" stroke-linecap="round" fill="none"/></svg><svg style="position:absolute;left:770.4px;top:35.3px;overflow:visible" width="9.8" height="6.9" viewBox="0 0 9.8 6.9" fill="none"><path d="M0.8 1 L4.90 5.20 L9.00 1" stroke="#4f5567" stroke-width="2.0" stroke-linecap="round" stroke-linejoin="round"/></svg><svg style="position:absolute;left:793.1px;top:28.8px;overflow:visible" width="18" height="17" viewBox="0 0 18 17" fill="none"><path d="M1.4 0.6 V15.6 H17.2" stroke="#cfccdb" stroke-width="1.3"/><path d="M2 9.6 L4.3 13.4 L8.3 4.4 L12 13.4 L16.6 1.5" stroke="#12b4fb" stroke-width="1.6" stroke-linecap="round" stroke-linejoin="round" fill="none"/></svg><svg style="position:absolute;left:820.3px;top:35.3px;overflow:visible" width="9.8" height="6.9" viewBox="0 0 9.8 6.9" fill="none"><path d="M0.8 1 L4.90 5.20 L9.00 1" stroke="#4f5567" stroke-width="2.0" stroke-linecap="round" stroke-linejoin="round"/></svg><svg style="position:absolute;left:852px;top:28px;overflow:visible" width="20" height="17" viewBox="0 0 20 17" fill="none"><path d="M10.4 1 C15 1 18.4 3.6 18.4 7.2 C18.4 10.6 15.2 12.8 11.6 13.2 L8.2 16 L8 13.1 C4.6 12.6 2.4 10.2 2.4 7.2 C2.4 3.6 5.8 1 10.4 1 Z" stroke="#596073" stroke-width="1.8" stroke-linejoin="round"/></svg><svg style="position:absolute;left:897.7px;top:27.7px;overflow:visible" width="19" height="19" viewBox="0 0 19 19" fill="none"><g stroke="#596073" stroke-width="1.7" fill="none"><path d="M1 6.4 V1 H6.4 M12.6 1 H18 V6.4 M18 12 V17.4 H12.6 M6.4 17.4 H1 V12"/></g></svg><svg style="position:absolute;left:0px;top:0px" width="956" height="526" viewBox="0 0 956 526" fill="none"><path d="M66.50 109.50 H923.50" stroke="#e5e5e6" stroke-width="1"/><path d="M66.50 167.50 H923.50" stroke="#e5e5e6" stroke-width="1"/><path d="M66.50 225.50 H923.50" stroke="#e5e5e6" stroke-width="1"/><path d="M66.50 284.50 H923.50" stroke="#e5e5e6" stroke-width="1"/><path d="M66.50 342.50 H923.50" stroke="#e5e5e6" stroke-width="1"/><path d="M66.50 400.50 H923.50" stroke="#e5e5e6" stroke-width="1"/><path d="M70.50 85.50 V447.30" stroke="#e5e5e6" stroke-width="1"/><path d="M210.50 85.50 V447.30" stroke="#e5e5e6" stroke-width="1"/><path d="M349.50 85.50 V447.30" stroke="#e5e5e6" stroke-width="1"/><path d="M489.50 85.50 V447.30" stroke="#e5e5e6" stroke-width="1"/><path d="M629.50 85.50 V447.30" stroke="#e5e5e6" stroke-width="1"/><path d="M769.50 85.50 V447.30" stroke="#e5e5e6" stroke-width="1"/><path d="M908.50 85.50 V447.30" stroke="#e5e5e6" stroke-width="1"/><path d="M923.50 85.50 V442.50" stroke="#e5e5e6" stroke-width="1"/><path d="M70.50 85.50 H923.50" stroke="#e5e5e6" stroke-width="1"/><path d="M70.50 442.50 H923.50" stroke="#e5e5e6" stroke-width="1"/><path d="M70.00 85.00 V443.00" stroke="#e3e3e4" stroke-width="2"/><path d="M75.08 221.24C77.67 248.79 80.26 284.88 82.84 303.89C85.43 322.90 88.02 328.72 90.61 335.32C93.19 341.91 95.78 343.46 98.37 343.46C100.96 343.46 103.54 154.90 106.13 154.90C108.72 154.90 111.31 258.49 113.90 278.28C116.48 298.07 119.07 298.07 121.66 298.07C124.25 298.07 126.83 278.86 129.42 267.80C132.01 256.75 134.60 231.72 137.18 231.72C139.77 231.72 142.36 372.56 144.95 372.56C147.53 372.56 150.12 224.74 152.71 224.74C155.30 224.74 157.89 307.38 160.47 307.38C163.06 307.38 165.65 178.18 168.24 178.18C170.82 178.18 173.41 260.82 176.00 260.82C178.59 260.82 181.17 195.44 183.76 178.18C186.35 160.91 188.94 157.22 191.53 157.22C194.11 157.22 196.70 202.23 199.29 224.74C201.88 247.24 204.46 267.80 207.05 292.25C209.64 316.69 212.23 371.40 214.81 371.40C217.40 371.40 219.99 210.77 222.58 210.77C225.16 210.77 227.75 215.42 230.34 215.42C232.93 215.42 235.52 188.65 238.10 188.65C240.69 188.65 243.28 376.06 245.87 376.06C248.45 376.06 251.04 188.65 253.63 188.65C256.22 188.65 258.80 266.64 261.39 266.64C263.98 266.64 266.57 248.02 269.16 248.02C271.74 248.02 274.33 301.56 276.92 301.56C279.51 301.56 282.09 224.54 284.68 203.78C287.27 183.03 289.86 177.01 292.44 177.01C295.03 177.01 297.62 313.20 300.21 313.20C302.79 313.20 305.38 242.20 307.97 216.59C310.56 190.98 313.15 159.55 315.73 159.55C318.32 159.55 320.91 356.27 323.50 356.27C326.08 356.27 328.67 226.09 331.26 193.31C333.85 160.52 336.43 159.55 339.02 159.55C341.61 159.55 344.20 203.78 346.79 203.78C349.37 203.78 351.96 171.19 354.55 166.54C357.14 161.88 359.72 161.88 362.31 161.88C364.90 161.88 367.49 238.32 370.07 273.62C372.66 308.93 375.25 373.73 377.84 373.73C380.42 373.73 383.01 336.48 385.60 336.48C388.19 336.48 390.78 353.94 393.36 353.94C395.95 353.94 398.54 200.29 401.13 200.29C403.71 200.29 406.30 200.29 408.89 224.74C411.48 249.18 414.06 371.40 416.65 371.40C419.24 371.40 421.83 313.20 424.42 313.20C427.00 313.20 429.59 346.96 432.18 346.96C434.77 346.96 437.35 185.16 439.94 185.16C442.53 185.16 445.12 185.16 447.70 214.26C450.29 243.36 452.88 359.76 455.47 359.76C458.05 359.76 460.64 165.37 463.23 165.37C465.82 165.37 468.41 250.34 470.99 281.77C473.58 313.20 476.17 353.94 478.76 353.94C481.34 353.94 483.93 186.32 486.52 171.19C489.11 156.06 491.69 156.06 494.28 156.06C496.87 156.06 499.46 359.76 502.05 359.76C504.63 359.76 507.22 153.73 509.81 153.73C512.40 153.73 514.98 299.23 517.57 299.23C520.16 299.23 522.75 167.70 525.33 167.70C527.92 167.70 530.51 300.40 533.10 300.40C535.68 300.40 538.27 152.57 540.86 152.57C543.45 152.57 546.04 277.31 548.62 309.71C551.21 342.11 553.80 346.96 556.39 346.96C558.97 346.96 561.56 265.48 564.15 224.74" stroke="#f25050" stroke-width="2.0" fill="none" stroke-linejoin="round" stroke-linecap="butt"/></svg><div style="position:absolute;top:102.3px;height:16px;line-height:16px;font-size:10.4px;font-weight:400;color:#9396a6;white-space:nowrap;letter-spacing:0.25px;left:-538.3px;width:600px;text-align:right;">50</div><div style="position:absolute;top:160.5px;height:16px;line-height:16px;font-size:10.4px;font-weight:400;color:#9396a6;white-space:nowrap;letter-spacing:0.25px;left:-538.3px;width:600px;text-align:right;">45</div><div style="position:absolute;top:218.7px;height:16px;line-height:16px;font-size:10.4px;font-weight:400;color:#9396a6;white-space:nowrap;letter-spacing:0.25px;left:-538.3px;width:600px;text-align:right;">40</div><div style="position:absolute;top:276.9px;height:16px;line-height:16px;font-size:10.4px;font-weight:400;color:#9396a6;white-space:nowrap;letter-spacing:0.25px;left:-538.3px;width:600px;text-align:right;">35</div><div style="position:absolute;top:335.1px;height:16px;line-height:16px;font-size:10.4px;font-weight:400;color:#9396a6;white-space:nowrap;letter-spacing:0.25px;left:-538.3px;width:600px;text-align:right;">30</div><div style="position:absolute;top:393.3px;height:16px;line-height:16px;font-size:10.4px;font-weight:400;color:#9396a6;white-space:nowrap;letter-spacing:0.25px;left:-538.3px;width:600px;text-align:right;">25</div><div style="position:absolute;top:448.9px;height:16px;line-height:16px;font-size:10.3px;font-weight:400;color:#9a9eae;white-space:nowrap;left:-229.5px;width:600px;text-align:center;">0</div><div style="position:absolute;top:448.9px;height:16px;line-height:16px;font-size:10.3px;font-weight:400;color:#9a9eae;white-space:nowrap;left:-89.76599999999999px;width:600px;text-align:center;">1.8</div><div style="position:absolute;top:448.9px;height:16px;line-height:16px;font-size:10.3px;font-weight:400;color:#9a9eae;white-space:nowrap;left:49.96800000000002px;width:600px;text-align:center;">3.6</div><div style="position:absolute;top:448.9px;height:16px;line-height:16px;font-size:10.3px;font-weight:400;color:#9a9eae;white-space:nowrap;left:189.702px;width:600px;text-align:center;">5.4</div><div style="position:absolute;top:448.9px;height:16px;line-height:16px;font-size:10.3px;font-weight:400;color:#9a9eae;white-space:nowrap;left:329.43600000000004px;width:600px;text-align:center;">7.2</div><div style="position:absolute;top:448.9px;height:16px;line-height:16px;font-size:10.3px;font-weight:400;color:#9a9eae;white-space:nowrap;left:469.16999999999996px;width:600px;text-align:center;">9</div><div style="position:absolute;top:448.9px;height:16px;line-height:16px;font-size:10.3px;font-weight:400;color:#9a9eae;white-space:nowrap;left:608.904px;width:600px;text-align:center;">10.8</div><div style="position:absolute;left:-174px;top:266.2px;width:400px;height:20px;line-height:20px;text-align:center;font-size:13.45px;color:#f25050;transform:rotate(-90deg);white-space:nowrap;-webkit-text-stroke:0.2px #f25050;">Температура °C</div><div style="position:absolute;top:479.7px;height:17px;line-height:17px;font-size:11.2px;font-weight:400;color:#22242b;white-space:nowrap;left:58.8px;">X</div><div style="position:absolute;left:69.8px;top:482.9px;width:24.2px;height:11.9px;border-radius:5.95px;background:#05b2fd;"><div style="position:absolute;right:3.2px;top:1.5px;width:8.9px;height:8.9px;border-radius:50%;background:#fff;"></div></div><div style="position:absolute;top:479.7px;height:17px;line-height:17px;font-size:11.2px;font-weight:400;color:#22242b;white-space:nowrap;left:103px;">Y</div><div style="position:absolute;left:114.8px;top:482.9px;width:24.2px;height:11.9px;border-radius:5.95px;background:#05b2fd;"><div style="position:absolute;right:3.2px;top:1.5px;width:8.9px;height:8.9px;border-radius:50%;background:#fff;"></div></div><svg style="position:absolute;left:171px;top:481.9px;overflow:visible" width="15" height="14" viewBox="0 0 15 14" fill="none"><g stroke="#1c1e26" stroke-width="1.05" fill="none" stroke-linecap="round" stroke-linejoin="round"><circle cx="7.5" cy="6.2" r="5.4"/><path d="M1.2 6.2 H5.4 L6.4 4.8 L7.7 7.6 L8.9 5.4 L9.6 6.2 H13.8"/><path d="M11.4 10.2 L13.6 12.4"/></g></svg><div style="position:absolute;left:196px;top:481.7px;width:23.1px;height:13.2px;border-radius:6.6px;background:#05b2fd;"><div style="position:absolute;right:3.2px;top:1.5px;width:10.2px;height:10.2px;border-radius:50%;background:#fff;"></div></div><svg style="position:absolute;left:227px;top:481.9px;overflow:visible" width="14" height="14" viewBox="0 0 14 14" fill="none"><g stroke="#1c1e26" stroke-width="1.05" fill="none" stroke-linecap="round" stroke-linejoin="round"><circle cx="6.5" cy="6.2" r="5.4"/><path d="M1.2 6.5 L3.8 5.6 L5.2 7.4 L7.8 6.0" stroke-width="1.3"/><path d="M10.4 10.2 L12.8 12.6"/></g></svg><div style="position:absolute;top:478.9px;height:19px;line-height:19px;font-size:12.2px;font-weight:400;color:#22242b;white-space:nowrap;left:171px;width:600px;text-align:center;">Время</div><div style="position:absolute;top:478.9px;height:19px;line-height:19px;font-size:12.2px;font-weight:400;color:#22242b;white-space:nowrap;left:871.2px;">Сетка</div><div style="position:absolute;left:909px;top:482.9px;width:24.2px;height:11.9px;border-radius:5.95px;background:#05b2fd;"><div style="position:absolute;right:3.2px;top:1.5px;width:8.9px;height:8.9px;border-radius:50%;background:#fff;"></div></div></div>
<div class="card" style="left:1287px;top:145px;width:956px;height:524px;"><div style="position:absolute;left:23.1px;top:26.1px;width:22px;height:23px;border-radius:3.2px;background:#ec864f;"></div><div style="position:absolute;top:24.6px;height:24px;line-height:24px;font-size:16.3px;font-weight:700;color:#22242b;white-space:nowrap;letter-spacing:-0.1px;left:63.6px;">Уровень pH</div><div class="btn tb" style="left:509.3px;top:21.2px;width:47px;height:32.4px;"></div><div class="btn tb" style="left:557.3px;top:21.2px;width:33px;height:32.4px;"></div><div class="btn tb" style="left:589.3px;top:21.2px;width:34px;height:32.4px;"></div><div class="btn tb" style="left:622.3px;top:21.2px;width:34px;height:32.4px;"></div><div class="btn tb" style="left:657.3px;top:21.2px;width:33px;height:32.4px;"></div><div class="btn tb" style="left:691.3px;top:21.2px;width:33.5px;height:32.4px;"></div><div class="btn tb" style="left:736.3px;top:22.3px;width:48px;height:31.299999999999997px;"></div><div class="btn tb" style="left:785.3px;top:22.3px;width:49px;height:31.299999999999997px;"></div><div class="btn tb" style="left:845.8px;top:21.2px;width:33.5px;height:32.4px;"></div><div class="btn tb" style="left:891.3px;top:21.2px;width:33.5px;height:32.4px;"></div><svg style="position:absolute;left:516.6px;top:28.5px;overflow:visible" width="16" height="17" viewBox="0 0 16 17" fill="none"><g stroke="#5d6579" stroke-width="1.4" stroke-linecap="round" stroke-linejoin="round"><path d="M8 1.2 V12.6 M3.3 8 L8 12.7 L12.7 8 M1.2 15.8 H14.8"/></g></svg><svg style="position:absolute;left:542.2px;top:34.4px;overflow:visible" width="9.8" height="6.9" viewBox="0 0 9.8 6.9" fill="none"><path d="M0.8 1 L4.90 5.20 L9.00 1" stroke="#4f5567" stroke-width="1.9" stroke-linecap="round" stroke-linejoin="round"/></svg><svg style="position:absolute;left:566px;top:29.2px;overflow:visible" width="15" height="15" viewBox="0 0 15 15" fill="none"><g stroke="#5d6579" stroke-width="1.25" stroke-linecap="round" stroke-linejoin="round"><path d="M7.5 11.4 C4.6 8.8 3.4 7 3.4 5.2 A4.1 4.1 0 0 1 11.6 5.2 C11.6 7 10.4 8.8 7.5 11.4 Z"/><circle cx="7.5" cy="5.1" r="1.2"/><path d="M1.2 13.6 H5.6 M9.4 13.6 H14"/></g></svg><svg style="position:absolute;left:598.2px;top:29.1px;overflow:visible" width="17" height="17" viewBox="0 0 17 17" fill="none"><rect x="1.1" y="1.1" width="14.6" height="14.2" rx="2.6" stroke="#596073" stroke-width="1.9"/><path d="M8.4 8.2 C6.8 5.4 4 5.4 4 8.2 C4 11 6.8 11 8.4 8.2 C10 5.4 12.8 5.4 12.8 8.2 C12.8 11 10 11 8.4 8.2 Z" stroke="#596073" stroke-width="1.1"/></svg><svg style="position:absolute;left:630.1px;top:27.7px;overflow:visible" width="19.5" height="19.5" viewBox="0 0 24 24" fill="none"><path d="M21.44 11.05l-9.19 9.19a6 6 0 0 1-8.49-8.49l9.19-9.19a4 4 0 0 1 5.66 5.66l-9.2 9.19a2 2 0 0 1-2.83-2.83l8.49-8.48" stroke="#596073" stroke-width="1.75" stroke-linecap="round" stroke-linejoin="round" fill="none"/></svg><svg style="position:absolute;left:663.3px;top:27.9px;overflow:visible" width="20" height="19" viewBox="0 0 20 19" fill="none"><g stroke="#596073" stroke-width="1.5" fill="none" stroke-linecap="butt"><path d="M1.6 0.4 V18 M18.4 0.4 V18"/><path d="M1.6 2.8 C5 1.6 7.6 3.2 10.6 5.2 C12.6 6.4 15 5.6 18.4 2.2"/><path d="M1.6 15.6 H18.4"/></g><circle cx="10.4" cy="9.8" r="1.9" stroke="#596073" stroke-width="1.1"/><path d="M11.8 11.2 L13.6 12.6" stroke="#596073" stroke-width="1.2" stroke-linecap="round"/></svg><svg style="position:absolute;left:698.3px;top:27.8px;overflow:visible" width="20" height="20" viewBox="0 0 20 20" fill="none"><rect x="1.0" y="1.0" width="17.3" height="16.9" rx="3.2" stroke="#596073" stroke-width="1.8"/><path d="M5.3 11.8 L8.5 8.6 L10.7 10.8 L14.8 7.3" stroke="#596073" stroke-width="1.3" stroke-linecap="round" stroke-linejoin="round"/></svg><svg style="position:absolute;left:743.5px;top:28.8px;overflow:visible" width="18" height="17" viewBox="0 0 18 17" fill="none"><path d="M1.9 0.6 V15.6 H17.6" stroke="#cfccdb" stroke-width="1.3"/><path d="M1.9 15 C3.4 13.8 3.6 11.4 5 10.6 C6.6 9.8 7.4 11.4 8.6 10.2 C9.8 8.8 8.2 6.6 9.8 5.2 C11.4 3.8 12.8 4.6 15.2 1.8" stroke="#12b4fb" stroke-width="1.3" stroke-linecap="round" fill="none"/></svg><svg style="position:absolute;left:770.4px;top:35.3px;overflow:visible" width="9.8" height="6.9" viewBox="0 0 9.8 6.9" fill="none"><path d="M0.8 1 L4.90 5.20 L9.00 1" stroke="#4f5567" stroke-width="2.0" stroke-linecap="round" stroke-linejoin="round"/></svg><svg style="position:absolute;left:793.1px;top:28.8px;overflow:visible" width="18" height="17" viewBox="0 0 18 17" fill="none"><path d="M1.4 0.6 V15.6 H17.2" stroke="#cfccdb" stroke-width="1.3"/><path d="M2 9.6 L4.3 13.4 L8.3 4.4 L12 13.4 L16.6 1.5" stroke="#12b4fb" stroke-width="1.6" stroke-linecap="round" stroke-linejoin="round" fill="none"/></svg><svg style="position:absolute;left:820.3px;top:35.3px;overflow:visible" width="9.8" height="6.9" viewBox="0 0 9.8 6.9" fill="none"><path d="M0.8 1 L4.90 5.20 L9.00 1" stroke="#4f5567" stroke-width="2.0" stroke-linecap="round" stroke-linejoin="round"/></svg><svg style="position:absolute;left:852px;top:28px;overflow:visible" width="20" height="17" viewBox="0 0 20 17" fill="none"><path d="M10.4 1 C15 1 18.4 3.6 18.4 7.2 C18.4 10.6 15.2 12.8 11.6 13.2 L8.2 16 L8 13.1 C4.6 12.6 2.4 10.2 2.4 7.2 C2.4 3.6 5.8 1 10.4 1 Z" stroke="#596073" stroke-width="1.8" stroke-linejoin="round"/></svg><svg style="position:absolute;left:897.7px;top:27.7px;overflow:visible" width="19" height="19" viewBox="0 0 19 19" fill="none"><g stroke="#596073" stroke-width="1.7" fill="none"><path d="M1 6.4 V1 H6.4 M12.6 1 H18 V6.4 M18 12 V17.4 H12.6 M6.4 17.4 H1 V12"/></g></svg><svg style="position:absolute;left:0px;top:0px" width="956" height="526" viewBox="0 0 956 526" fill="none"><path d="M66.50 89.50 H923.50" stroke="#e5e5e6" stroke-width="1"/><path d="M66.50 147.50 H923.50" stroke="#e5e5e6" stroke-width="1"/><path d="M66.50 206.50 H923.50" stroke="#e5e5e6" stroke-width="1"/><path d="M66.50 265.50 H923.50" stroke="#e5e5e6" stroke-width="1"/><path d="M66.50 324.50 H923.50" stroke="#e5e5e6" stroke-width="1"/><path d="M66.50 382.50 H923.50" stroke="#e5e5e6" stroke-width="1"/><path d="M66.50 441.50 H923.50" stroke="#e5e5e6" stroke-width="1"/><path d="M70.50 85.50 V447.30" stroke="#e5e5e6" stroke-width="1"/><path d="M210.50 85.50 V447.30" stroke="#e5e5e6" stroke-width="1"/><path d="M349.50 85.50 V447.30" stroke="#e5e5e6" stroke-width="1"/><path d="M489.50 85.50 V447.30" stroke="#e5e5e6" stroke-width="1"/><path d="M629.50 85.50 V447.30" stroke="#e5e5e6" stroke-width="1"/><path d="M769.50 85.50 V447.30" stroke="#e5e5e6" stroke-width="1"/><path d="M908.50 85.50 V447.30" stroke="#e5e5e6" stroke-width="1"/><path d="M923.50 85.50 V442.50" stroke="#e5e5e6" stroke-width="1"/><path d="M70.50 85.50 H923.50" stroke="#e5e5e6" stroke-width="1"/><path d="M70.50 442.50 H923.50" stroke="#e5e5e6" stroke-width="1"/><path d="M70.00 85.00 V443.00" stroke="#e3e3e4" stroke-width="2"/><path d="M75.08 331.72C77.67 280.45 80.26 177.91 82.84 177.91C85.43 177.91 88.02 356.75 90.61 356.75C93.19 356.75 95.78 200.00 98.37 200.00C100.96 200.00 103.54 200.00 106.13 218.45C108.72 236.90 111.31 312.92 113.90 312.92C116.48 312.92 119.07 282.84 121.66 282.84C124.25 282.84 126.83 360.86 129.42 360.86C132.01 360.86 134.60 236.00 137.18 204.35C139.77 172.70 142.36 170.98 144.95 170.98C147.53 170.98 150.12 330.07 152.71 330.07C155.30 330.07 157.89 182.03 160.47 182.03C163.06 182.03 165.65 321.85 168.24 321.85C170.82 321.85 173.41 301.68 176.00 277.20C178.59 252.72 181.17 195.79 183.76 174.97C186.35 154.16 188.94 152.30 191.53 152.30C194.11 152.30 196.70 262.99 199.29 288.95C201.88 314.91 204.46 306.14 207.05 317.15C209.64 328.16 212.23 358.86 214.81 358.86C217.40 358.86 219.99 204.00 222.58 204.00C225.16 204.00 227.75 370.73 230.34 370.73C232.93 370.73 235.52 297.53 238.10 297.53C240.69 297.53 243.28 349.81 245.87 349.81C248.45 349.81 251.04 349.29 253.63 330.66C256.22 312.04 258.80 257.13 261.39 238.07C263.98 219.02 266.57 223.07 269.16 216.34C271.74 209.60 274.33 199.18 276.92 197.65C279.51 196.12 282.09 196.12 284.68 196.12C287.27 196.12 289.86 244.30 292.44 265.45C295.03 286.60 297.62 314.27 300.21 323.02C302.79 331.78 305.38 328.63 307.97 332.66C310.56 336.69 313.15 353.93 315.73 353.93C318.32 353.93 320.91 288.93 323.50 265.45C326.08 241.97 328.67 213.05 331.26 213.05C333.85 213.05 336.43 251.47 339.02 251.47C341.61 251.47 344.20 194.95 346.79 194.95C349.37 194.95 351.96 194.95 354.55 194.95C357.14 194.95 359.72 250.72 362.31 269.56C364.90 288.40 367.49 307.99 370.07 307.99C372.66 307.99 375.25 307.99 377.84 296.24C380.42 284.49 383.01 191.78 385.60 184.84C388.19 177.91 390.78 177.91 393.36 177.91C395.95 177.91 398.54 251.57 401.13 273.68C403.71 295.78 406.30 310.57 408.89 310.57C411.48 310.57 414.06 283.78 416.65 283.78C419.24 283.78 421.83 317.86 424.42 317.86C427.00 317.86 429.59 212.44 432.18 184.84C434.77 157.25 437.35 152.30 439.94 152.30C442.53 152.30 445.12 282.96 447.70 282.96C450.29 282.96 452.88 166.05 455.47 166.05C458.05 166.05 460.64 265.45 463.23 265.45C465.82 265.45 468.41 159.23 470.99 159.23C473.58 159.23 476.17 286.37 478.76 286.37C481.34 286.37 483.93 286.37 486.52 278.38C489.11 270.39 491.69 170.98 494.28 170.98C496.87 170.98 499.46 263.00 502.05 297.18C504.63 331.35 507.22 376.02 509.81 376.02C512.40 376.02 514.98 313.39 517.57 308.57C520.16 303.75 522.75 303.75 525.33 303.75C527.92 303.75 530.51 328.94 533.10 336.65C535.68 344.37 538.27 350.05 540.86 350.05C543.45 350.05 546.04 179.91 548.62 179.91C551.21 179.91 553.80 370.73 556.39 370.73C558.97 370.73 561.56 335.09 564.15 317.27" stroke="#ec864f" stroke-width="2.0" fill="none" stroke-linejoin="round" stroke-linecap="butt"/></svg><div style="position:absolute;top:82.0px;height:16px;line-height:16px;font-size:10.4px;font-weight:400;color:#9396a6;white-space:nowrap;letter-spacing:0.25px;left:-538.3px;width:600px;text-align:right;">1.5</div><div style="position:absolute;top:140.8px;height:16px;line-height:16px;font-size:10.4px;font-weight:400;color:#9396a6;white-space:nowrap;letter-spacing:0.25px;left:-538.3px;width:600px;text-align:right;">1</div><div style="position:absolute;top:199.5px;height:16px;line-height:16px;font-size:10.4px;font-weight:400;color:#9396a6;white-space:nowrap;letter-spacing:0.25px;left:-538.3px;width:600px;text-align:right;">0.5</div><div style="position:absolute;top:258.2px;height:16px;line-height:16px;font-size:10.4px;font-weight:400;color:#9396a6;white-space:nowrap;letter-spacing:0.25px;left:-538.3px;width:600px;text-align:right;">0</div><div style="position:absolute;top:317.0px;height:16px;line-height:16px;font-size:10.4px;font-weight:400;color:#9396a6;white-space:nowrap;letter-spacing:0.25px;left:-538.3px;width:600px;text-align:right;">-0.5</div><div style="position:absolute;top:375.8px;height:16px;line-height:16px;font-size:10.4px;font-weight:400;color:#9396a6;white-space:nowrap;letter-spacing:0.25px;left:-538.3px;width:600px;text-align:right;">-1</div><div style="position:absolute;top:434.5px;height:16px;line-height:16px;font-size:10.4px;font-weight:400;color:#9396a6;white-space:nowrap;letter-spacing:0.25px;left:-538.3px;width:600px;text-align:right;">-1.5</div><div style="position:absolute;top:448.9px;height:16px;line-height:16px;font-size:10.3px;font-weight:400;color:#9a9eae;white-space:nowrap;left:-229.5px;width:600px;text-align:center;">0</div><div style="position:absolute;top:448.9px;height:16px;line-height:16px;font-size:10.3px;font-weight:400;color:#9a9eae;white-space:nowrap;left:-89.76599999999999px;width:600px;text-align:center;">1.8</div><div style="position:absolute;top:448.9px;height:16px;line-height:16px;font-size:10.3px;font-weight:400;color:#9a9eae;white-space:nowrap;left:49.96800000000002px;width:600px;text-align:center;">3.6</div><div style="position:absolute;top:448.9px;height:16px;line-height:16px;font-size:10.3px;font-weight:400;color:#9a9eae;white-space:nowrap;left:189.702px;width:600px;text-align:center;">5.4</div><div style="position:absolute;top:448.9px;height:16px;line-height:16px;font-size:10.3px;font-weight:400;color:#9a9eae;white-space:nowrap;left:329.43600000000004px;width:600px;text-align:center;">7.2</div><div style="position:absolute;top:448.9px;height:16px;line-height:16px;font-size:10.3px;font-weight:400;color:#9a9eae;white-space:nowrap;left:469.16999999999996px;width:600px;text-align:center;">9</div><div style="position:absolute;top:448.9px;height:16px;line-height:16px;font-size:10.3px;font-weight:400;color:#9a9eae;white-space:nowrap;left:608.904px;width:600px;text-align:center;">10.8</div><div style="position:absolute;left:-174px;top:266.2px;width:400px;height:20px;line-height:20px;text-align:center;font-size:13.45px;color:#ec864f;transform:rotate(-90deg);white-space:nowrap;-webkit-text-stroke:0.2px #ec864f;">Уровень pH pH</div><div style="position:absolute;top:479.7px;height:17px;line-height:17px;font-size:11.2px;font-weight:400;color:#22242b;white-space:nowrap;left:58.8px;">X</div><div style="position:absolute;left:69.8px;top:482.9px;width:24.2px;height:11.9px;border-radius:5.95px;background:#05b2fd;"><div style="position:absolute;right:3.2px;top:1.5px;width:8.9px;height:8.9px;border-radius:50%;background:#fff;"></div></div><div style="position:absolute;top:479.7px;height:17px;line-height:17px;font-size:11.2px;font-weight:400;color:#22242b;white-space:nowrap;left:103px;">Y</div><div style="position:absolute;left:114.8px;top:482.9px;width:24.2px;height:11.9px;border-radius:5.95px;background:#05b2fd;"><div style="position:absolute;right:3.2px;top:1.5px;width:8.9px;height:8.9px;border-radius:50%;background:#fff;"></div></div><svg style="position:absolute;left:171px;top:481.9px;overflow:visible" width="15" height="14" viewBox="0 0 15 14" fill="none"><g stroke="#1c1e26" stroke-width="1.05" fill="none" stroke-linecap="round" stroke-linejoin="round"><circle cx="7.5" cy="6.2" r="5.4"/><path d="M1.2 6.2 H5.4 L6.4 4.8 L7.7 7.6 L8.9 5.4 L9.6 6.2 H13.8"/><path d="M11.4 10.2 L13.6 12.4"/></g></svg><div style="position:absolute;left:196px;top:481.7px;width:23.1px;height:13.2px;border-radius:6.6px;background:#05b2fd;"><div style="position:absolute;right:3.2px;top:1.5px;width:10.2px;height:10.2px;border-radius:50%;background:#fff;"></div></div><svg style="position:absolute;left:227px;top:481.9px;overflow:visible" width="14" height="14" viewBox="0 0 14 14" fill="none"><g stroke="#1c1e26" stroke-width="1.05" fill="none" stroke-linecap="round" stroke-linejoin="round"><circle cx="6.5" cy="6.2" r="5.4"/><path d="M1.2 6.5 L3.8 5.6 L5.2 7.4 L7.8 6.0" stroke-width="1.3"/><path d="M10.4 10.2 L12.8 12.6"/></g></svg><div style="position:absolute;top:478.9px;height:19px;line-height:19px;font-size:12.2px;font-weight:400;color:#22242b;white-space:nowrap;left:171px;width:600px;text-align:center;">Время</div><div style="position:absolute;top:478.9px;height:19px;line-height:19px;font-size:12.2px;font-weight:400;color:#22242b;white-space:nowrap;left:871.2px;">Сетка</div><div style="position:absolute;left:909px;top:482.9px;width:24.2px;height:11.9px;border-radius:5.95px;background:#05b2fd;"><div style="position:absolute;right:3.2px;top:1.5px;width:8.9px;height:8.9px;border-radius:50%;background:#fff;"></div></div></div>
<div class="card" style="left:308px;top:691px;width:956px;height:524px;"><div style="position:absolute;left:23.1px;top:27.1px;width:22px;height:23px;border-radius:3.2px;background:#f8dc80;"></div><div style="position:absolute;top:25.6px;height:24px;line-height:24px;font-size:16.3px;font-weight:700;color:#22242b;white-space:nowrap;letter-spacing:-0.1px;left:63.6px;">Освещённость</div><div class="btn tb" style="left:509.3px;top:22.2px;width:47px;height:32.4px;"></div><div class="btn tb" style="left:557.3px;top:22.2px;width:33px;height:32.4px;"></div><div class="btn tb" style="left:589.3px;top:22.2px;width:34px;height:32.4px;"></div><div class="btn tb" style="left:622.3px;top:22.2px;width:34px;height:32.4px;"></div><div class="btn tb" style="left:657.3px;top:22.2px;width:33px;height:32.4px;"></div><div class="btn tb" style="left:691.3px;top:22.2px;width:33.5px;height:32.4px;"></div><div class="btn tb" style="left:736.3px;top:23.3px;width:48px;height:31.299999999999997px;"></div><div class="btn tb" style="left:785.3px;top:23.3px;width:49px;height:31.299999999999997px;"></div><div class="btn tb" style="left:845.8px;top:22.2px;width:33.5px;height:32.4px;"></div><div class="btn tb" style="left:891.3px;top:22.2px;width:33.5px;height:32.4px;"></div><svg style="position:absolute;left:516.6px;top:29.5px;overflow:visible" width="16" height="17" viewBox="0 0 16 17" fill="none"><g stroke="#5d6579" stroke-width="1.4" stroke-linecap="round" stroke-linejoin="round"><path d="M8 1.2 V12.6 M3.3 8 L8 12.7 L12.7 8 M1.2 15.8 H14.8"/></g></svg><svg style="position:absolute;left:542.2px;top:35.4px;overflow:visible" width="9.8" height="6.9" viewBox="0 0 9.8 6.9" fill="none"><path d="M0.8 1 L4.90 5.20 L9.00 1" stroke="#4f5567" stroke-width="1.9" stroke-linecap="round" stroke-linejoin="round"/></svg><svg style="position:absolute;left:566px;top:30.2px;overflow:visible" width="15" height="15" viewBox="0 0 15 15" fill="none"><g stroke="#5d6579" stroke-width="1.25" stroke-linecap="round" stroke-linejoin="round"><path d="M7.5 11.4 C4.6 8.8 3.4 7 3.4 5.2 A4.1 4.1 0 0 1 11.6 5.2 C11.6 7 10.4 8.8 7.5 11.4 Z"/><circle cx="7.5" cy="5.1" r="1.2"/><path d="M1.2 13.6 H5.6 M9.4 13.6 H14"/></g></svg><svg style="position:absolute;left:598.2px;top:30.1px;overflow:visible" width="17" height="17" viewBox="0 0 17 17" fill="none"><rect x="1.1" y="1.1" width="14.6" height="14.2" rx="2.6" stroke="#596073" stroke-width="1.9"/><path d="M8.4 8.2 C6.8 5.4 4 5.4 4 8.2 C4 11 6.8 11 8.4 8.2 C10 5.4 12.8 5.4 12.8 8.2 C12.8 11 10 11 8.4 8.2 Z" stroke="#596073" stroke-width="1.1"/></svg><svg style="position:absolute;left:630.1px;top:28.7px;overflow:visible" width="19.5" height="19.5" viewBox="0 0 24 24" fill="none"><path d="M21.44 11.05l-9.19 9.19a6 6 0 0 1-8.49-8.49l9.19-9.19a4 4 0 0 1 5.66 5.66l-9.2 9.19a2 2 0 0 1-2.83-2.83l8.49-8.48" stroke="#596073" stroke-width="1.75" stroke-linecap="round" stroke-linejoin="round" fill="none"/></svg><svg style="position:absolute;left:663.3px;top:28.9px;overflow:visible" width="20" height="19" viewBox="0 0 20 19" fill="none"><g stroke="#596073" stroke-width="1.5" fill="none" stroke-linecap="butt"><path d="M1.6 0.4 V18 M18.4 0.4 V18"/><path d="M1.6 2.8 C5 1.6 7.6 3.2 10.6 5.2 C12.6 6.4 15 5.6 18.4 2.2"/><path d="M1.6 15.6 H18.4"/></g><circle cx="10.4" cy="9.8" r="1.9" stroke="#596073" stroke-width="1.1"/><path d="M11.8 11.2 L13.6 12.6" stroke="#596073" stroke-width="1.2" stroke-linecap="round"/></svg><svg style="position:absolute;left:698.3px;top:28.8px;overflow:visible" width="20" height="20" viewBox="0 0 20 20" fill="none"><rect x="1.0" y="1.0" width="17.3" height="16.9" rx="3.2" stroke="#596073" stroke-width="1.8"/><path d="M5.3 11.8 L8.5 8.6 L10.7 10.8 L14.8 7.3" stroke="#596073" stroke-width="1.3" stroke-linecap="round" stroke-linejoin="round"/></svg><svg style="position:absolute;left:743.5px;top:29.8px;overflow:visible" width="18" height="17" viewBox="0 0 18 17" fill="none"><path d="M1.9 0.6 V15.6 H17.6" stroke="#cfccdb" stroke-width="1.3"/><path d="M1.9 15 C3.4 13.8 3.6 11.4 5 10.6 C6.6 9.8 7.4 11.4 8.6 10.2 C9.8 8.8 8.2 6.6 9.8 5.2 C11.4 3.8 12.8 4.6 15.2 1.8" stroke="#12b4fb" stroke-width="1.3" stroke-linecap="round" fill="none"/></svg><svg style="position:absolute;left:770.4px;top:36.3px;overflow:visible" width="9.8" height="6.9" viewBox="0 0 9.8 6.9" fill="none"><path d="M0.8 1 L4.90 5.20 L9.00 1" stroke="#4f5567" stroke-width="2.0" stroke-linecap="round" stroke-linejoin="round"/></svg><svg style="position:absolute;left:793.1px;top:29.8px;overflow:visible" width="18" height="17" viewBox="0 0 18 17" fill="none"><path d="M1.4 0.6 V15.6 H17.2" stroke="#cfccdb" stroke-width="1.3"/><path d="M2 9.6 L4.3 13.4 L8.3 4.4 L12 13.4 L16.6 1.5" stroke="#12b4fb" stroke-width="1.6" stroke-linecap="round" stroke-linejoin="round" fill="none"/></svg><svg style="position:absolute;left:820.3px;top:36.3px;overflow:visible" width="9.8" height="6.9" viewBox="0 0 9.8 6.9" fill="none"><path d="M0.8 1 L4.90 5.20 L9.00 1" stroke="#4f5567" stroke-width="2.0" stroke-linecap="round" stroke-linejoin="round"/></svg><svg style="position:absolute;left:852px;top:29.0px;overflow:visible" width="20" height="17" viewBox="0 0 20 17" fill="none"><path d="M10.4 1 C15 1 18.4 3.6 18.4 7.2 C18.4 10.6 15.2 12.8 11.6 13.2 L8.2 16 L8 13.1 C4.6 12.6 2.4 10.2 2.4 7.2 C2.4 3.6 5.8 1 10.4 1 Z" stroke="#596073" stroke-width="1.8" stroke-linejoin="round"/></svg><svg style="position:absolute;left:897.7px;top:28.7px;overflow:visible" width="19" height="19" viewBox="0 0 19 19" fill="none"><g stroke="#596073" stroke-width="1.7" fill="none"><path d="M1 6.4 V1 H6.4 M12.6 1 H18 V6.4 M18 12 V17.4 H12.6 M6.4 17.4 H1 V12"/></g></svg><svg style="position:absolute;left:0px;top:0px" width="956" height="526" viewBox="0 0 956 526" fill="none"><path d="M66.50 96.50 H923.50" stroke="#e5e5e6" stroke-width="1"/><path d="M66.50 152.50 H923.50" stroke="#e5e5e6" stroke-width="1"/><path d="M66.50 208.50 H923.50" stroke="#e5e5e6" stroke-width="1"/><path d="M66.50 264.50 H923.50" stroke="#e5e5e6" stroke-width="1"/><path d="M66.50 320.50 H923.50" stroke="#e5e5e6" stroke-width="1"/><path d="M66.50 376.50 H923.50" stroke="#e5e5e6" stroke-width="1"/><path d="M66.50 431.50 H923.50" stroke="#e5e5e6" stroke-width="1"/><path d="M70.50 85.50 V447.30" stroke="#e5e5e6" stroke-width="1"/><path d="M210.50 85.50 V447.30" stroke="#e5e5e6" stroke-width="1"/><path d="M349.50 85.50 V447.30" stroke="#e5e5e6" stroke-width="1"/><path d="M489.50 85.50 V447.30" stroke="#e5e5e6" stroke-width="1"/><path d="M629.50 85.50 V447.30" stroke="#e5e5e6" stroke-width="1"/><path d="M769.50 85.50 V447.30" stroke="#e5e5e6" stroke-width="1"/><path d="M908.50 85.50 V447.30" stroke="#e5e5e6" stroke-width="1"/><path d="M923.50 85.50 V442.50" stroke="#e5e5e6" stroke-width="1"/><path d="M70.50 85.50 H923.50" stroke="#e5e5e6" stroke-width="1"/><path d="M70.50 442.50 H923.50" stroke="#e5e5e6" stroke-width="1"/><path d="M70.00 85.00 V443.00" stroke="#e3e3e4" stroke-width="2"/><path d="M75.08 264.25C77.67 301.51 80.26 376.03 82.84 376.03C85.43 376.03 88.02 264.25 90.61 264.25C93.19 264.25 95.78 376.03 98.37 376.03C100.96 376.03 103.54 264.25 106.13 264.25C108.72 264.25 111.31 264.25 113.90 264.25C116.48 264.25 119.07 264.25 121.66 264.25C124.25 264.25 126.83 264.25 129.42 264.25C132.01 264.25 134.60 264.25 137.18 264.25C139.77 264.25 142.36 264.25 144.95 264.25C147.53 264.25 150.12 264.25 152.71 264.25C155.30 264.25 157.89 264.25 160.47 264.25C163.06 264.25 165.65 264.25 168.24 264.25C170.82 264.25 173.41 264.25 176.00 264.25C178.59 264.25 181.17 264.25 183.76 264.25C186.35 264.25 188.94 376.03 191.53 376.03C194.11 376.03 196.70 264.25 199.29 264.25C201.88 264.25 204.46 376.03 207.05 376.03C209.64 376.03 212.23 264.25 214.81 264.25C217.40 264.25 219.99 376.03 222.58 376.03C225.16 376.03 227.75 152.49 230.34 152.49C232.93 152.49 235.52 152.49 238.10 152.49C240.69 152.49 243.28 264.25 245.87 264.25C248.45 264.25 251.04 152.49 253.63 152.49C256.22 152.49 258.80 376.03 261.39 376.03C263.98 376.03 266.57 301.51 269.16 264.25C271.74 227.00 274.33 152.49 276.92 152.49C279.51 152.49 282.09 264.25 284.68 264.25C287.27 264.25 289.86 264.25 292.44 264.25C295.03 264.25 297.62 264.25 300.21 264.25C302.79 264.25 305.38 152.49 307.97 152.49C310.56 152.49 313.15 264.25 315.73 264.25C318.32 264.25 320.91 152.49 323.50 152.49C326.08 152.49 328.67 152.49 331.26 152.49C333.85 152.49 336.43 376.03 339.02 376.03C341.61 376.03 344.20 376.03 346.79 376.03C349.37 376.03 351.96 376.03 354.55 376.03C357.14 376.03 359.72 264.25 362.31 264.25C364.90 264.25 367.49 376.03 370.07 376.03C372.66 376.03 375.25 264.25 377.84 264.25C380.42 264.25 383.01 264.25 385.60 264.25C388.19 264.25 390.78 376.03 393.36 376.03C395.95 376.03 398.54 264.25 401.13 264.25C403.71 264.25 406.30 376.03 408.89 376.03C411.48 376.03 414.06 152.49 416.65 152.49C419.24 152.49 421.83 264.25 424.42 264.25C427.00 264.25 429.59 264.25 432.18 264.25C434.77 264.25 437.35 264.25 439.94 264.25C442.53 264.25 445.12 264.25 447.70 264.25C450.29 264.25 452.88 152.49 455.47 152.49C458.05 152.49 460.64 264.25 463.23 264.25C465.82 264.25 468.41 152.49 470.99 152.49C473.58 152.49 476.17 264.25 478.76 264.25C481.34 264.25 483.93 152.49 486.52 152.49C489.11 152.49 491.69 264.25 494.28 264.25C496.87 264.25 499.46 264.25 502.05 264.25C504.63 264.25 507.22 376.03 509.81 376.03C512.40 376.03 514.98 264.25 517.57 264.25C520.16 264.25 522.75 264.25 525.33 264.25C527.92 264.25 530.51 152.49 533.10 152.49C535.68 152.49 538.27 376.03 540.86 376.03C543.45 376.03 546.04 264.25 548.62 264.25C551.21 264.25 553.80 376.03 556.39 376.03C558.97 376.03 561.56 301.51 564.15 264.25" stroke="#f8dc80" stroke-width="2.0" fill="none" stroke-linejoin="round" stroke-linecap="butt"/></svg><div style="position:absolute;top:89.4px;height:16px;line-height:16px;font-size:10.4px;font-weight:400;color:#9396a6;white-space:nowrap;letter-spacing:0.25px;left:-538.3px;width:600px;text-align:right;">2</div><div style="position:absolute;top:145.3px;height:16px;line-height:16px;font-size:10.4px;font-weight:400;color:#9396a6;white-space:nowrap;letter-spacing:0.25px;left:-538.3px;width:600px;text-align:right;">1</div><div style="position:absolute;top:201.2px;height:16px;line-height:16px;font-size:10.4px;font-weight:400;color:#9396a6;white-space:nowrap;letter-spacing:0.25px;left:-538.3px;width:600px;text-align:right;">1</div><div style="position:absolute;top:257.1px;height:16px;line-height:16px;font-size:10.4px;font-weight:400;color:#9396a6;white-space:nowrap;letter-spacing:0.25px;left:-538.3px;width:600px;text-align:right;">0</div><div style="position:absolute;top:312.9px;height:16px;line-height:16px;font-size:10.4px;font-weight:400;color:#9396a6;white-space:nowrap;letter-spacing:0.25px;left:-538.3px;width:600px;text-align:right;">-1</div><div style="position:absolute;top:368.8px;height:16px;line-height:16px;font-size:10.4px;font-weight:400;color:#9396a6;white-space:nowrap;letter-spacing:0.25px;left:-538.3px;width:600px;text-align:right;">-1</div><div style="position:absolute;top:424.7px;height:16px;line-height:16px;font-size:10.4px;font-weight:400;color:#9396a6;white-space:nowrap;letter-spacing:0.25px;left:-538.3px;width:600px;text-align:right;">-2</div><div style="position:absolute;top:449.3px;height:16px;line-height:16px;font-size:10.3px;font-weight:400;color:#9a9eae;white-space:nowrap;left:-229.5px;width:600px;text-align:center;">0</div><div style="position:absolute;top:449.3px;height:16px;line-height:16px;font-size:10.3px;font-weight:400;color:#9a9eae;white-space:nowrap;left:-89.76599999999999px;width:600px;text-align:center;">1.8</div><div style="position:absolute;top:449.3px;height:16px;line-height:16px;font-size:10.3px;font-weight:400;color:#9a9eae;white-space:nowrap;left:49.96800000000002px;width:600px;text-align:center;">3.6</div><div style="position:absolute;top:449.3px;height:16px;line-height:16px;font-size:10.3px;font-weight:400;color:#9a9eae;white-space:nowrap;left:189.702px;width:600px;text-align:center;">5.4</div><div style="position:absolute;top:449.3px;height:16px;line-height:16px;font-size:10.3px;font-weight:400;color:#9a9eae;white-space:nowrap;left:329.43600000000004px;width:600px;text-align:center;">7.2</div><div style="position:absolute;top:449.3px;height:16px;line-height:16px;font-size:10.3px;font-weight:400;color:#9a9eae;white-space:nowrap;left:469.16999999999996px;width:600px;text-align:center;">9</div><div style="position:absolute;top:449.3px;height:16px;line-height:16px;font-size:10.3px;font-weight:400;color:#9a9eae;white-space:nowrap;left:608.904px;width:600px;text-align:center;">10.8</div><div style="position:absolute;left:-174px;top:266.59999999999997px;width:400px;height:20px;line-height:20px;text-align:center;font-size:13.45px;color:#f8dc80;transform:rotate(-90deg);white-space:nowrap;-webkit-text-stroke:0.2px #f8dc80;">Освещённость лк</div><div style="position:absolute;top:480.7px;height:17px;line-height:17px;font-size:11.2px;font-weight:400;color:#22242b;white-space:nowrap;left:58.8px;">X</div><div style="position:absolute;left:69.8px;top:483.9px;width:24.2px;height:11.9px;border-radius:5.95px;background:#05b2fd;"><div style="position:absolute;right:3.2px;top:1.5px;width:8.9px;height:8.9px;border-radius:50%;background:#fff;"></div></div><div style="position:absolute;top:480.7px;height:17px;line-height:17px;font-size:11.2px;font-weight:400;color:#22242b;white-space:nowrap;left:103px;">Y</div><div style="position:absolute;left:114.8px;top:483.9px;width:24.2px;height:11.9px;border-radius:5.95px;background:#05b2fd;"><div style="position:absolute;right:3.2px;top:1.5px;width:8.9px;height:8.9px;border-radius:50%;background:#fff;"></div></div><svg style="position:absolute;left:171px;top:482.9px;overflow:visible" width="15" height="14" viewBox="0 0 15 14" fill="none"><g stroke="#1c1e26" stroke-width="1.05" fill="none" stroke-linecap="round" stroke-linejoin="round"><circle cx="7.5" cy="6.2" r="5.4"/><path d="M1.2 6.2 H5.4 L6.4 4.8 L7.7 7.6 L8.9 5.4 L9.6 6.2 H13.8"/><path d="M11.4 10.2 L13.6 12.4"/></g></svg><div style="position:absolute;left:196px;top:482.7px;width:23.1px;height:13.2px;border-radius:6.6px;background:#05b2fd;"><div style="position:absolute;right:3.2px;top:1.5px;width:10.2px;height:10.2px;border-radius:50%;background:#fff;"></div></div><svg style="position:absolute;left:227px;top:482.9px;overflow:visible" width="14" height="14" viewBox="0 0 14 14" fill="none"><g stroke="#1c1e26" stroke-width="1.05" fill="none" stroke-linecap="round" stroke-linejoin="round"><circle cx="6.5" cy="6.2" r="5.4"/><path d="M1.2 6.5 L3.8 5.6 L5.2 7.4 L7.8 6.0" stroke-width="1.3"/><path d="M10.4 10.2 L12.8 12.6"/></g></svg><div style="position:absolute;top:479.9px;height:19px;line-height:19px;font-size:12.2px;font-weight:400;color:#22242b;white-space:nowrap;left:171px;width:600px;text-align:center;">Время</div><div style="position:absolute;top:479.9px;height:19px;line-height:19px;font-size:12.2px;font-weight:400;color:#22242b;white-space:nowrap;left:871.2px;">Сетка</div><div style="position:absolute;left:909px;top:483.9px;width:24.2px;height:11.9px;border-radius:5.95px;background:#05b2fd;"><div style="position:absolute;right:3.2px;top:1.5px;width:8.9px;height:8.9px;border-radius:50%;background:#fff;"></div></div></div>
<div class="card" style="left:1287px;top:691px;width:956px;height:524px;"><div style="position:absolute;left:23.1px;top:27.1px;width:22px;height:23px;border-radius:3.2px;background:#bfd83d;"></div><div style="position:absolute;top:25.6px;height:24px;line-height:24px;font-size:16.3px;font-weight:700;color:#22242b;white-space:nowrap;letter-spacing:-0.1px;left:63.6px;">Температура окр среды</div><div class="btn tb" style="left:509.3px;top:22.2px;width:47px;height:32.4px;"></div><div class="btn tb" style="left:557.3px;top:22.2px;width:33px;height:32.4px;"></div><div class="btn tb" style="left:589.3px;top:22.2px;width:34px;height:32.4px;"></div><div class="btn tb" style="left:622.3px;top:22.2px;width:34px;height:32.4px;"></div><div class="btn tb" style="left:657.3px;top:22.2px;width:33px;height:32.4px;"></div><div class="btn tb" style="left:691.3px;top:22.2px;width:33.5px;height:32.4px;"></div><div class="btn tb" style="left:736.3px;top:23.3px;width:48px;height:31.299999999999997px;"></div><div class="btn tb" style="left:785.3px;top:23.3px;width:49px;height:31.299999999999997px;"></div><div class="btn tb" style="left:845.8px;top:22.2px;width:33.5px;height:32.4px;"></div><div class="btn tb" style="left:891.3px;top:22.2px;width:33.5px;height:32.4px;"></div><svg style="position:absolute;left:516.6px;top:29.5px;overflow:visible" width="16" height="17" viewBox="0 0 16 17" fill="none"><g stroke="#5d6579" stroke-width="1.4" stroke-linecap="round" stroke-linejoin="round"><path d="M8 1.2 V12.6 M3.3 8 L8 12.7 L12.7 8 M1.2 15.8 H14.8"/></g></svg><svg style="position:absolute;left:542.2px;top:35.4px;overflow:visible" width="9.8" height="6.9" viewBox="0 0 9.8 6.9" fill="none"><path d="M0.8 1 L4.90 5.20 L9.00 1" stroke="#4f5567" stroke-width="1.9" stroke-linecap="round" stroke-linejoin="round"/></svg><svg style="position:absolute;left:566px;top:30.2px;overflow:visible" width="15" height="15" viewBox="0 0 15 15" fill="none"><g stroke="#5d6579" stroke-width="1.25" stroke-linecap="round" stroke-linejoin="round"><path d="M7.5 11.4 C4.6 8.8 3.4 7 3.4 5.2 A4.1 4.1 0 0 1 11.6 5.2 C11.6 7 10.4 8.8 7.5 11.4 Z"/><circle cx="7.5" cy="5.1" r="1.2"/><path d="M1.2 13.6 H5.6 M9.4 13.6 H14"/></g></svg><svg style="position:absolute;left:598.2px;top:30.1px;overflow:visible" width="17" height="17" viewBox="0 0 17 17" fill="none"><rect x="1.1" y="1.1" width="14.6" height="14.2" rx="2.6" stroke="#596073" stroke-width="1.9"/><path d="M8.4 8.2 C6.8 5.4 4 5.4 4 8.2 C4 11 6.8 11 8.4 8.2 C10 5.4 12.8 5.4 12.8 8.2 C12.8 11 10 11 8.4 8.2 Z" stroke="#596073" stroke-width="1.1"/></svg><svg style="position:absolute;left:630.1px;top:28.7px;overflow:visible" width="19.5" height="19.5" viewBox="0 0 24 24" fill="none"><path d="M21.44 11.05l-9.19 9.19a6 6 0 0 1-8.49-8.49l9.19-9.19a4 4 0 0 1 5.66 5.66l-9.2 9.19a2 2 0 0 1-2.83-2.83l8.49-8.48" stroke="#596073" stroke-width="1.75" stroke-linecap="round" stroke-linejoin="round" fill="none"/></svg><svg style="position:absolute;left:663.3px;top:28.9px;overflow:visible" width="20" height="19" viewBox="0 0 20 19" fill="none"><g stroke="#596073" stroke-width="1.5" fill="none" stroke-linecap="butt"><path d="M1.6 0.4 V18 M18.4 0.4 V18"/><path d="M1.6 2.8 C5 1.6 7.6 3.2 10.6 5.2 C12.6 6.4 15 5.6 18.4 2.2"/><path d="M1.6 15.6 H18.4"/></g><circle cx="10.4" cy="9.8" r="1.9" stroke="#596073" stroke-width="1.1"/><path d="M11.8 11.2 L13.6 12.6" stroke="#596073" stroke-width="1.2" stroke-linecap="round"/></svg><svg style="position:absolute;left:698.3px;top:28.8px;overflow:visible" width="20" height="20" viewBox="0 0 20 20" fill="none"><rect x="1.0" y="1.0" width="17.3" height="16.9" rx="3.2" stroke="#596073" stroke-width="1.8"/><path d="M5.3 11.8 L8.5 8.6 L10.7 10.8 L14.8 7.3" stroke="#596073" stroke-width="1.3" stroke-linecap="round" stroke-linejoin="round"/></svg><svg style="position:absolute;left:743.5px;top:29.8px;overflow:visible" width="18" height="17" viewBox="0 0 18 17" fill="none"><path d="M1.9 0.6 V15.6 H17.6" stroke="#cfccdb" stroke-width="1.3"/><path d="M1.9 15 C3.4 13.8 3.6 11.4 5 10.6 C6.6 9.8 7.4 11.4 8.6 10.2 C9.8 8.8 8.2 6.6 9.8 5.2 C11.4 3.8 12.8 4.6 15.2 1.8" stroke="#12b4fb" stroke-width="1.3" stroke-linecap="round" fill="none"/></svg><svg style="position:absolute;left:770.4px;top:36.3px;overflow:visible" width="9.8" height="6.9" viewBox="0 0 9.8 6.9" fill="none"><path d="M0.8 1 L4.90 5.20 L9.00 1" stroke="#4f5567" stroke-width="2.0" stroke-linecap="round" stroke-linejoin="round"/></svg><svg style="position:absolute;left:793.1px;top:29.8px;overflow:visible" width="18" height="17" viewBox="0 0 18 17" fill="none"><path d="M1.4 0.6 V15.6 H17.2" stroke="#cfccdb" stroke-width="1.3"/><path d="M2 9.6 L4.3 13.4 L8.3 4.4 L12 13.4 L16.6 1.5" stroke="#12b4fb" stroke-width="1.6" stroke-linecap="round" stroke-linejoin="round" fill="none"/></svg><svg style="position:absolute;left:820.3px;top:36.3px;overflow:visible" width="9.8" height="6.9" viewBox="0 0 9.8 6.9" fill="none"><path d="M0.8 1 L4.90 5.20 L9.00 1" stroke="#4f5567" stroke-width="2.0" stroke-linecap="round" stroke-linejoin="round"/></svg><svg style="position:absolute;left:852px;top:29.0px;overflow:visible" width="20" height="17" viewBox="0 0 20 17" fill="none"><path d="M10.4 1 C15 1 18.4 3.6 18.4 7.2 C18.4 10.6 15.2 12.8 11.6 13.2 L8.2 16 L8 13.1 C4.6 12.6 2.4 10.2 2.4 7.2 C2.4 3.6 5.8 1 10.4 1 Z" stroke="#596073" stroke-width="1.8" stroke-linejoin="round"/></svg><svg style="position:absolute;left:897.7px;top:28.7px;overflow:visible" width="19" height="19" viewBox="0 0 19 19" fill="none"><g stroke="#596073" stroke-width="1.7" fill="none"><path d="M1 6.4 V1 H6.4 M12.6 1 H18 V6.4 M18 12 V17.4 H12.6 M6.4 17.4 H1 V12"/></g></svg><svg style="position:absolute;left:0px;top:0px" width="956" height="526" viewBox="0 0 956 526" fill="none"><path d="M66.50 107.50 H923.50" stroke="#e5e5e6" stroke-width="1"/><path d="M66.50 165.50 H923.50" stroke="#e5e5e6" stroke-width="1"/><path d="M66.50 223.50 H923.50" stroke="#e5e5e6" stroke-width="1"/><path d="M66.50 281.50 H923.50" stroke="#e5e5e6" stroke-width="1"/><path d="M66.50 339.50 H923.50" stroke="#e5e5e6" stroke-width="1"/><path d="M66.50 398.50 H923.50" stroke="#e5e5e6" stroke-width="1"/><path d="M70.50 85.50 V447.30" stroke="#e5e5e6" stroke-width="1"/><path d="M210.50 85.50 V447.30" stroke="#e5e5e6" stroke-width="1"/><path d="M349.50 85.50 V447.30" stroke="#e5e5e6" stroke-width="1"/><path d="M489.50 85.50 V447.30" stroke="#e5e5e6" stroke-width="1"/><path d="M629.50 85.50 V447.30" stroke="#e5e5e6" stroke-width="1"/><path d="M769.50 85.50 V447.30" stroke="#e5e5e6" stroke-width="1"/><path d="M908.50 85.50 V447.30" stroke="#e5e5e6" stroke-width="1"/><path d="M923.50 85.50 V442.50" stroke="#e5e5e6" stroke-width="1"/><path d="M70.50 85.50 H923.50" stroke="#e5e5e6" stroke-width="1"/><path d="M70.50 442.50 H923.50" stroke="#e5e5e6" stroke-width="1"/><path d="M70.00 85.00 V443.00" stroke="#e3e3e4" stroke-width="2"/><path d="M75.08 206.04C77.67 246.20 80.26 310.80 82.84 326.51C85.43 342.23 88.02 342.23 90.61 342.23C93.19 342.23 95.78 165.30 98.37 165.30C100.96 165.30 103.54 165.30 106.13 173.45C108.72 181.60 111.31 314.29 113.90 314.29C116.48 314.29 119.07 214.19 121.66 214.19C124.25 214.19 126.83 362.02 129.42 362.02C132.01 362.02 134.60 275.88 137.18 275.88C139.77 275.88 142.36 287.52 144.95 287.52C147.53 287.52 150.12 173.45 152.71 173.45C155.30 173.45 157.89 334.08 160.47 334.08C163.06 334.08 165.65 181.60 168.24 181.60C170.82 181.60 173.41 258.42 176.00 258.42C178.59 258.42 181.17 213.61 183.76 213.61C186.35 213.61 188.94 348.05 191.53 348.05C194.11 348.05 196.70 333.30 199.29 324.77C201.88 316.23 204.46 305.76 207.05 296.83C209.64 287.91 212.23 293.34 214.81 271.22C217.40 249.11 219.99 164.14 222.58 164.14C225.16 164.14 227.75 208.37 230.34 208.37C232.93 208.37 235.52 204.88 238.10 204.88C240.69 204.88 243.28 280.78 245.87 283.45C248.45 286.11 251.04 285.19 253.63 286.36C256.22 287.52 258.80 318.95 261.39 318.95C263.98 318.95 266.57 232.81 269.16 232.81C271.74 232.81 274.33 366.67 276.92 366.67C279.51 366.67 282.09 260.75 284.68 260.75C287.27 260.75 289.86 350.38 292.44 350.38C295.03 350.38 297.62 247.94 300.21 247.94C302.79 247.94 305.38 249.88 307.97 253.76C310.56 257.64 313.15 262.11 315.73 271.22C318.32 280.34 320.91 297.70 323.50 308.47C326.08 319.24 328.67 335.83 331.26 335.83C333.85 335.83 336.43 171.70 339.02 171.70C341.61 171.70 344.20 298.00 346.79 298.00C349.37 298.00 351.96 271.81 354.55 271.81C357.14 271.81 359.72 328.84 362.31 342.23C364.90 355.61 367.49 355.61 370.07 355.61C372.66 355.61 375.25 291.21 377.84 282.28C380.42 273.35 383.01 277.75 385.60 271.22C388.19 264.70 390.78 220.59 393.36 220.59C395.95 220.59 398.54 375.40 401.13 375.40C403.71 375.40 406.30 277.63 408.89 277.63C411.48 277.63 414.06 375.40 416.65 375.40C419.24 375.40 421.83 202.55 424.42 202.55C427.00 202.55 429.59 273.55 432.18 273.55C434.77 273.55 437.35 240.96 439.94 240.96C442.53 240.96 445.12 295.09 447.70 295.09C450.29 295.09 452.88 164.72 455.47 164.72C458.05 164.72 460.64 165.01 463.23 173.45C465.82 181.89 468.41 215.35 470.99 215.35C473.58 215.35 476.17 151.91 478.76 151.91C481.34 151.91 483.93 151.91 486.52 157.15C489.11 162.39 491.69 203.23 494.28 229.32C496.87 255.41 499.46 313.71 502.05 313.71C504.63 313.71 507.22 289.85 509.81 289.85C512.40 289.85 514.98 356.20 517.57 356.20C520.16 356.20 522.75 157.73 525.33 157.73C527.92 157.73 530.51 180.92 533.10 200.22C535.68 219.52 538.27 246.39 540.86 273.55C543.45 300.71 546.04 363.18 548.62 363.18C551.21 363.18 553.80 190.89 556.39 183.92C558.97 176.96 561.56 177.46 564.15 176.94" stroke="#bfd83d" stroke-width="2.0" fill="none" stroke-linejoin="round" stroke-linecap="butt"/></svg><div style="position:absolute;top:99.9px;height:16px;line-height:16px;font-size:10.4px;font-weight:400;color:#9396a6;white-space:nowrap;letter-spacing:0.25px;left:-538.3px;width:600px;text-align:right;">50</div><div style="position:absolute;top:158.1px;height:16px;line-height:16px;font-size:10.4px;font-weight:400;color:#9396a6;white-space:nowrap;letter-spacing:0.25px;left:-538.3px;width:600px;text-align:right;">45</div><div style="position:absolute;top:216.3px;height:16px;line-height:16px;font-size:10.4px;font-weight:400;color:#9396a6;white-space:nowrap;letter-spacing:0.25px;left:-538.3px;width:600px;text-align:right;">40</div><div style="position:absolute;top:274.5px;height:16px;line-height:16px;font-size:10.4px;font-weight:400;color:#9396a6;white-space:nowrap;letter-spacing:0.25px;left:-538.3px;width:600px;text-align:right;">35</div><div style="position:absolute;top:332.7px;height:16px;line-height:16px;font-size:10.4px;font-weight:400;color:#9396a6;white-space:nowrap;letter-spacing:0.25px;left:-538.3px;width:600px;text-align:right;">30</div><div style="position:absolute;top:390.9px;height:16px;line-height:16px;font-size:10.4px;font-weight:400;color:#9396a6;white-space:nowrap;letter-spacing:0.25px;left:-538.3px;width:600px;text-align:right;">25</div><div style="position:absolute;top:449.3px;height:16px;line-height:16px;font-size:10.3px;font-weight:400;color:#9a9eae;white-space:nowrap;left:-229.5px;width:600px;text-align:center;">0</div><div style="position:absolute;top:449.3px;height:16px;line-height:16px;font-size:10.3px;font-weight:400;color:#9a9eae;white-space:nowrap;left:-89.76599999999999px;width:600px;text-align:center;">1.8</div><div style="position:absolute;top:449.3px;height:16px;line-height:16px;font-size:10.3px;font-weight:400;color:#9a9eae;white-space:nowrap;left:49.96800000000002px;width:600px;text-align:center;">3.6</div><div style="position:absolute;top:449.3px;height:16px;line-height:16px;font-size:10.3px;font-weight:400;color:#9a9eae;white-space:nowrap;left:189.702px;width:600px;text-align:center;">5.4</div><div style="position:absolute;top:449.3px;height:16px;line-height:16px;font-size:10.3px;font-weight:400;color:#9a9eae;white-space:nowrap;left:329.43600000000004px;width:600px;text-align:center;">7.2</div><div style="position:absolute;top:449.3px;height:16px;line-height:16px;font-size:10.3px;font-weight:400;color:#9a9eae;white-space:nowrap;left:469.16999999999996px;width:600px;text-align:center;">9</div><div style="position:absolute;top:449.3px;height:16px;line-height:16px;font-size:10.3px;font-weight:400;color:#9a9eae;white-space:nowrap;left:608.904px;width:600px;text-align:center;">10.8</div><div style="position:absolute;left:-174px;top:266.59999999999997px;width:400px;height:20px;line-height:20px;text-align:center;font-size:13.45px;color:#bfd83d;transform:rotate(-90deg);white-space:nowrap;-webkit-text-stroke:0.2px #bfd83d;">Температура окр среды °C</div><div style="position:absolute;top:480.7px;height:17px;line-height:17px;font-size:11.2px;font-weight:400;color:#22242b;white-space:nowrap;left:58.8px;">X</div><div style="position:absolute;left:69.8px;top:483.9px;width:24.2px;height:11.9px;border-radius:5.95px;background:#05b2fd;"><div style="position:absolute;right:3.2px;top:1.5px;width:8.9px;height:8.9px;border-radius:50%;background:#fff;"></div></div><div style="position:absolute;top:480.7px;height:17px;line-height:17px;font-size:11.2px;font-weight:400;color:#22242b;white-space:nowrap;left:103px;">Y</div><div style="position:absolute;left:114.8px;top:483.9px;width:24.2px;height:11.9px;border-radius:5.95px;background:#05b2fd;"><div style="position:absolute;right:3.2px;top:1.5px;width:8.9px;height:8.9px;border-radius:50%;background:#fff;"></div></div><svg style="position:absolute;left:171px;top:482.9px;overflow:visible" width="15" height="14" viewBox="0 0 15 14" fill="none"><g stroke="#1c1e26" stroke-width="1.05" fill="none" stroke-linecap="round" stroke-linejoin="round"><circle cx="7.5" cy="6.2" r="5.4"/><path d="M1.2 6.2 H5.4 L6.4 4.8 L7.7 7.6 L8.9 5.4 L9.6 6.2 H13.8"/><path d="M11.4 10.2 L13.6 12.4"/></g></svg><div style="position:absolute;left:196px;top:482.7px;width:23.1px;height:13.2px;border-radius:6.6px;background:#05b2fd;"><div style="position:absolute;right:3.2px;top:1.5px;width:10.2px;height:10.2px;border-radius:50%;background:#fff;"></div></div><svg style="position:absolute;left:227px;top:482.9px;overflow:visible" width="14" height="14" viewBox="0 0 14 14" fill="none"><g stroke="#1c1e26" stroke-width="1.05" fill="none" stroke-linecap="round" stroke-linejoin="round"><circle cx="6.5" cy="6.2" r="5.4"/><path d="M1.2 6.5 L3.8 5.6 L5.2 7.4 L7.8 6.0" stroke-width="1.3"/><path d="M10.4 10.2 L12.8 12.6"/></g></svg><div style="position:absolute;top:479.9px;height:19px;line-height:19px;font-size:12.2px;font-weight:400;color:#22242b;white-space:nowrap;left:171px;width:600px;text-align:center;">Время</div><div style="position:absolute;top:479.9px;height:19px;line-height:19px;font-size:12.2px;font-weight:400;color:#22242b;white-space:nowrap;left:871.2px;">Сетка</div><div style="position:absolute;left:909px;top:483.9px;width:24.2px;height:11.9px;border-radius:5.95px;background:#05b2fd;"><div style="position:absolute;right:3.2px;top:1.5px;width:8.9px;height:8.9px;border-radius:50%;background:#fff;"></div></div></div>
<div style="position:absolute;left:2255px;top:152px;width:4.5px;height:716px;background:#b8c3cf;border-radius:2.5px;"></div>
<div style="position:absolute;left:2276px;top:146px;width:261px;height:32px;background:#f5f8fb;border:1px solid #bcc8da;border-radius:3px;"></div>
<div style="position:absolute;left:2276px;top:146px;width:105px;height:32px;background:#3fa7f3;border-radius:3px 0 0 3px;"></div>
<div style="position:absolute;left:2467px;top:147px;width:1px;height:30px;background:#bcc8da;"></div>
<div style="position:absolute;top:150.2px;height:22px;line-height:22px;font-size:14.5px;font-weight:400;color:#fff;white-space:nowrap;left:2289px;">Данные</div>
<svg style="position:absolute;left:2359.4px;top:158.8px;overflow:visible" width="9.4" height="6.7" viewBox="0 0 9.4 6.7" fill="none"><path d="M0.8 1 L4.70 5.00 L8.60 1" stroke="#fff" stroke-width="2.1" stroke-linecap="round" stroke-linejoin="round"/></svg>
<div style="position:absolute;top:150.2px;height:22px;line-height:22px;font-size:14.5px;font-weight:400;color:#7c8197;white-space:nowrap;left:2393px;">Импорт</div>
<div style="position:absolute;top:150.2px;height:22px;line-height:22px;font-size:14.5px;font-weight:400;color:#7c8197;white-space:nowrap;left:2481px;">Логи</div>
<div style="position:absolute;left:2276px;top:193px;width:22px;height:21px;background:#f25055;border-radius:3px;"></div>
<div style="position:absolute;top:191.0px;height:25px;line-height:25px;font-size:16.9px;font-weight:700;color:#22242b;white-space:nowrap;letter-spacing:-0.2px;left:2309px;">Температура</div>
<div style="position:absolute;left:2276px;top:227px;width:261px;height:34.6px;background:#d5dfe8;border-radius:4px;"></div>
<div style="position:absolute;top:235.3px;height:17px;line-height:17px;font-size:10.8px;font-weight:400;color:#5a6072;white-space:nowrap;left:2291.3px;">№</div>
<div style="position:absolute;top:235.0px;height:17px;line-height:17px;font-size:11px;font-weight:400;color:#5a6072;white-space:nowrap;left:2328.2px;">сек.</div>
<div style="position:absolute;top:235.0px;height:17px;line-height:17px;font-size:11px;font-weight:400;color:#5a6072;white-space:nowrap;left:2373.2px;">данные</div>
<div style="position:absolute;top:235.0px;height:17px;line-height:17px;font-size:11.4px;font-weight:400;color:#5a6072;white-space:nowrap;left:2438px;">м д1 д2 д3 д4</div>
<svg style="position:absolute;left:2304.8px;top:240.2px;" width="7" height="8" viewBox="0 0 7 8" fill="none"><path d="M3.5 0.4 V7 M1.5 5 L3.5 7.2 L5.5 5" stroke="#5a6072" stroke-width="1.1" stroke-linecap="round" stroke-linejoin="round"/></svg>
<svg style="position:absolute;left:2413.7px;top:240.2px;" width="7" height="8" viewBox="0 0 7 8" fill="none"><path d="M3.5 0.4 V7 M1.5 5 L3.5 7.2 L5.5 5" stroke="#5a6072" stroke-width="1.1" stroke-linecap="round" stroke-linejoin="round"/></svg>
<svg style="position:absolute;left:2514.1px;top:240.2px;" width="7" height="8" viewBox="0 0 7 8" fill="none"><path d="M3.5 0.4 V7 M1.5 5 L3.5 7.2 L5.5 5" stroke="#5a6072" stroke-width="1.1" stroke-linecap="round" stroke-linejoin="round"/></svg>
<div style="position:absolute;top:269.8px;height:18px;line-height:18px;font-size:12.1px;font-weight:400;color:#33363f;white-space:nowrap;left:1802.3000000000002px;width:1000px;text-align:center;">1</div>
<div style="position:absolute;top:269.8px;height:18px;line-height:18px;font-size:12.1px;font-weight:400;color:#33363f;white-space:nowrap;left:1845.5px;width:1000px;text-align:center;">0.059</div>
<div style="position:absolute;top:269.8px;height:18px;line-height:18px;font-size:12.1px;font-weight:400;color:#33363f;white-space:nowrap;left:1900px;width:1000px;text-align:center;">40.4</div>
<div style="position:absolute;left:2276px;top:294.6px;width:260px;height:33px;background:#eff3f7;"></div>
<div style="position:absolute;top:302.8px;height:18px;line-height:18px;font-size:12.1px;font-weight:400;color:#33363f;white-space:nowrap;left:1802.3000000000002px;width:1000px;text-align:center;">2</div>
<div style="position:absolute;top:302.8px;height:18px;line-height:18px;font-size:12.1px;font-weight:400;color:#33363f;white-space:nowrap;left:1845.5px;width:1000px;text-align:center;">0.159</div>
<div style="position:absolute;top:302.8px;height:18px;line-height:18px;font-size:12.1px;font-weight:400;color:#33363f;white-space:nowrap;left:1900px;width:1000px;text-align:center;">33.3</div>
<div style="position:absolute;top:335.8px;height:18px;line-height:18px;font-size:12.1px;font-weight:400;color:#33363f;white-space:nowrap;left:1802.3000000000002px;width:1000px;text-align:center;">3</div>
<div style="position:absolute;top:335.8px;height:18px;line-height:18px;font-size:12.1px;font-weight:400;color:#33363f;white-space:nowrap;left:1845.5px;width:1000px;text-align:center;">0.259</div>
<div style="position:absolute;top:335.8px;height:18px;line-height:18px;font-size:12.1px;font-weight:400;color:#33363f;white-space:nowrap;left:1900px;width:1000px;text-align:center;">30.6</div>
<div style="position:absolute;left:2276px;top:360.6px;width:260px;height:33px;background:#eff3f7;"></div>
<div style="position:absolute;top:368.8px;height:18px;line-height:18px;font-size:12.1px;font-weight:400;color:#33363f;white-space:nowrap;left:1802.3000000000002px;width:1000px;text-align:center;">4</div>
<div style="position:absolute;top:368.8px;height:18px;line-height:18px;font-size:12.1px;font-weight:400;color:#33363f;white-space:nowrap;left:1845.5px;width:1000px;text-align:center;">0.359</div>
<div style="position:absolute;top:368.8px;height:18px;line-height:18px;font-size:12.1px;font-weight:400;color:#33363f;white-space:nowrap;left:1900px;width:1000px;text-align:center;">29.9</div>
<div style="position:absolute;top:401.8px;height:18px;line-height:18px;font-size:12.1px;font-weight:400;color:#33363f;white-space:nowrap;left:1802.3000000000002px;width:1000px;text-align:center;">5</div>
<div style="position:absolute;top:401.8px;height:18px;line-height:18px;font-size:12.1px;font-weight:400;color:#33363f;white-space:nowrap;left:1845.5px;width:1000px;text-align:center;">0.459</div>
<div style="position:absolute;top:401.8px;height:18px;line-height:18px;font-size:12.1px;font-weight:400;color:#33363f;white-space:nowrap;left:1900px;width:1000px;text-align:center;">46.1</div>
<div style="position:absolute;left:2276px;top:426.6px;width:260px;height:33px;background:#eff3f7;"></div>
<div style="position:absolute;top:434.8px;height:18px;line-height:18px;font-size:12.1px;font-weight:400;color:#33363f;white-space:nowrap;left:1802.3000000000002px;width:1000px;text-align:center;">6</div>
<div style="position:absolute;top:434.8px;height:18px;line-height:18px;font-size:12.1px;font-weight:400;color:#33363f;white-space:nowrap;left:1845.5px;width:1000px;text-align:center;">0.559</div>
<div style="position:absolute;top:434.8px;height:18px;line-height:18px;font-size:12.1px;font-weight:400;color:#33363f;white-space:nowrap;left:1900px;width:1000px;text-align:center;">35.5</div>
<div style="position:absolute;top:467.8px;height:18px;line-height:18px;font-size:12.1px;font-weight:400;color:#33363f;white-space:nowrap;left:1802.3000000000002px;width:1000px;text-align:center;">7</div>
<div style="position:absolute;top:467.8px;height:18px;line-height:18px;font-size:12.1px;font-weight:400;color:#33363f;white-space:nowrap;left:1845.5px;width:1000px;text-align:center;">0.659</div>
<div style="position:absolute;top:467.8px;height:18px;line-height:18px;font-size:12.1px;font-weight:400;color:#33363f;white-space:nowrap;left:1900px;width:1000px;text-align:center;">33.8</div>
<div style="position:absolute;left:2276px;top:492.6px;width:260px;height:33px;background:#eff3f7;"></div>
<div style="position:absolute;top:500.8px;height:18px;line-height:18px;font-size:12.1px;font-weight:400;color:#33363f;white-space:nowrap;left:1802.3000000000002px;width:1000px;text-align:center;">8</div>
<div style="position:absolute;top:500.8px;height:18px;line-height:18px;font-size:12.1px;font-weight:400;color:#33363f;white-space:nowrap;left:1845.5px;width:1000px;text-align:center;">0.759</div>
<div style="position:absolute;top:500.8px;height:18px;line-height:18px;font-size:12.1px;font-weight:400;color:#33363f;white-space:nowrap;left:1900px;width:1000px;text-align:center;">36.4</div>
<div style="position:absolute;top:533.8px;height:18px;line-height:18px;font-size:12.1px;font-weight:400;color:#33363f;white-space:nowrap;left:1802.3000000000002px;width:1000px;text-align:center;">9</div>
<div style="position:absolute;top:533.8px;height:18px;line-height:18px;font-size:12.1px;font-weight:400;color:#33363f;white-space:nowrap;left:1845.5px;width:1000px;text-align:center;">0.859</div>
<div style="position:absolute;top:533.8px;height:18px;line-height:18px;font-size:12.1px;font-weight:400;color:#33363f;white-space:nowrap;left:1900px;width:1000px;text-align:center;">39.5</div>
<div style="position:absolute;left:2276px;top:558.6px;width:260px;height:33px;background:#eff3f7;"></div>
<div style="position:absolute;top:566.8px;height:18px;line-height:18px;font-size:12.1px;font-weight:400;color:#33363f;white-space:nowrap;left:1802.3000000000002px;width:1000px;text-align:center;">10</div>
<div style="position:absolute;top:566.8px;height:18px;line-height:18px;font-size:12.1px;font-weight:400;color:#33363f;white-space:nowrap;left:1845.5px;width:1000px;text-align:center;">0.959</div>
<div style="position:absolute;top:566.8px;height:18px;line-height:18px;font-size:12.1px;font-weight:400;color:#33363f;white-space:nowrap;left:1900px;width:1000px;text-align:center;">27.4</div>
<div style="position:absolute;top:599.8px;height:18px;line-height:18px;font-size:12.1px;font-weight:400;color:#33363f;white-space:nowrap;left:1802.3000000000002px;width:1000px;text-align:center;">11</div>
<div style="position:absolute;top:599.8px;height:18px;line-height:18px;font-size:12.1px;font-weight:400;color:#33363f;white-space:nowrap;left:1845.5px;width:1000px;text-align:center;">1.059</div>
<div style="position:absolute;top:599.8px;height:18px;line-height:18px;font-size:12.1px;font-weight:400;color:#33363f;white-space:nowrap;left:1900px;width:1000px;text-align:center;">40.1</div>
<div style="position:absolute;left:2276px;top:624.6px;width:260px;height:33px;background:#eff3f7;"></div>
<div style="position:absolute;top:632.8px;height:18px;line-height:18px;font-size:12.1px;font-weight:400;color:#33363f;white-space:nowrap;left:1802.3000000000002px;width:1000px;text-align:center;">12</div>
<div style="position:absolute;top:632.8px;height:18px;line-height:18px;font-size:12.1px;font-weight:400;color:#33363f;white-space:nowrap;left:1845.5px;width:1000px;text-align:center;">1.159</div>
<div style="position:absolute;top:632.8px;height:18px;line-height:18px;font-size:12.1px;font-weight:400;color:#33363f;white-space:nowrap;left:1900px;width:1000px;text-align:center;">33</div>
<div style="position:absolute;top:665.8px;height:18px;line-height:18px;font-size:12.1px;font-weight:400;color:#33363f;white-space:nowrap;left:1802.3000000000002px;width:1000px;text-align:center;">13</div>
<div style="position:absolute;top:665.8px;height:18px;line-height:18px;font-size:12.1px;font-weight:400;color:#33363f;white-space:nowrap;left:1845.5px;width:1000px;text-align:center;">1.259</div>
<div style="position:absolute;top:665.8px;height:18px;line-height:18px;font-size:12.1px;font-weight:400;color:#33363f;white-space:nowrap;left:1900px;width:1000px;text-align:center;">44.1</div>
<div style="position:absolute;left:2276px;top:690.6px;width:260px;height:33px;background:#eff3f7;"></div>
<div style="position:absolute;top:698.8px;height:18px;line-height:18px;font-size:12.1px;font-weight:400;color:#33363f;white-space:nowrap;left:1802.3000000000002px;width:1000px;text-align:center;">14</div>
<div style="position:absolute;top:698.8px;height:18px;line-height:18px;font-size:12.1px;font-weight:400;color:#33363f;white-space:nowrap;left:1845.5px;width:1000px;text-align:center;">1.359</div>
<div style="position:absolute;top:698.8px;height:18px;line-height:18px;font-size:12.1px;font-weight:400;color:#33363f;white-space:nowrap;left:1900px;width:1000px;text-align:center;">37</div>
<div style="position:absolute;top:731.8px;height:18px;line-height:18px;font-size:12.1px;font-weight:400;color:#33363f;white-space:nowrap;left:1802.3000000000002px;width:1000px;text-align:center;">15</div>
<div style="position:absolute;top:731.8px;height:18px;line-height:18px;font-size:12.1px;font-weight:400;color:#33363f;white-space:nowrap;left:1845.5px;width:1000px;text-align:center;">1.459</div>
<div style="position:absolute;top:731.8px;height:18px;line-height:18px;font-size:12.1px;font-weight:400;color:#33363f;white-space:nowrap;left:1900px;width:1000px;text-align:center;">44.1</div>
<div style="position:absolute;left:2276px;top:756.6px;width:260px;height:33px;background:#eff3f7;"></div>
<div style="position:absolute;top:764.8px;height:18px;line-height:18px;font-size:12.1px;font-weight:400;color:#33363f;white-space:nowrap;left:1802.3000000000002px;width:1000px;text-align:center;">16</div>
<div style="position:absolute;top:764.8px;height:18px;line-height:18px;font-size:12.1px;font-weight:400;color:#33363f;white-space:nowrap;left:1845.5px;width:1000px;text-align:center;">1.559</div>
<div style="position:absolute;top:764.8px;height:18px;line-height:18px;font-size:12.1px;font-weight:400;color:#33363f;white-space:nowrap;left:1900px;width:1000px;text-align:center;">45.9</div>
<div style="position:absolute;top:797.8px;height:18px;line-height:18px;font-size:12.1px;font-weight:400;color:#33363f;white-space:nowrap;left:1802.3000000000002px;width:1000px;text-align:center;">17</div>
<div style="position:absolute;top:797.8px;height:18px;line-height:18px;font-size:12.1px;font-weight:400;color:#33363f;white-space:nowrap;left:1845.5px;width:1000px;text-align:center;">1.659</div>
<div style="position:absolute;top:797.8px;height:18px;line-height:18px;font-size:12.1px;font-weight:400;color:#33363f;white-space:nowrap;left:1900px;width:1000px;text-align:center;">40.1</div>
<div style="position:absolute;left:2276px;top:822.6px;width:260px;height:33px;background:#eff3f7;"></div>
<div style="position:absolute;top:830.8px;height:18px;line-height:18px;font-size:12.1px;font-weight:400;color:#33363f;white-space:nowrap;left:1802.3000000000002px;width:1000px;text-align:center;">18</div>
<div style="position:absolute;top:830.8px;height:18px;line-height:18px;font-size:12.1px;font-weight:400;color:#33363f;white-space:nowrap;left:1845.5px;width:1000px;text-align:center;">1.759</div>
<div style="position:absolute;top:830.8px;height:18px;line-height:18px;font-size:12.1px;font-weight:400;color:#33363f;white-space:nowrap;left:1900px;width:1000px;text-align:center;">34.3</div>
<div style="position:absolute;top:863.8px;height:18px;line-height:18px;font-size:12.1px;font-weight:400;color:#33363f;white-space:nowrap;left:1802.3000000000002px;width:1000px;text-align:center;">19</div>
<div style="position:absolute;top:863.8px;height:18px;line-height:18px;font-size:12.1px;font-weight:400;color:#33363f;white-space:nowrap;left:1845.5px;width:1000px;text-align:center;">1.859</div>
<div style="position:absolute;top:863.8px;height:18px;line-height:18px;font-size:12.1px;font-weight:400;color:#33363f;white-space:nowrap;left:1900px;width:1000px;text-align:center;">27.5</div>
<div style="position:absolute;left:2276px;top:888.6px;width:260px;height:33px;background:#eff3f7;"></div>
<div style="position:absolute;top:896.8px;height:18px;line-height:18px;font-size:12.1px;font-weight:400;color:#33363f;white-space:nowrap;left:1802.3000000000002px;width:1000px;text-align:center;">20</div>
<div style="position:absolute;top:896.8px;height:18px;line-height:18px;font-size:12.1px;font-weight:400;color:#33363f;white-space:nowrap;left:1845.5px;width:1000px;text-align:center;">1.959</div>
<div style="position:absolute;top:896.8px;height:18px;line-height:18px;font-size:12.1px;font-weight:400;color:#33363f;white-space:nowrap;left:1900px;width:1000px;text-align:center;">41.3</div>
<div style="position:absolute;top:929.8px;height:18px;line-height:18px;font-size:12.1px;font-weight:400;color:#33363f;white-space:nowrap;left:1802.3000000000002px;width:1000px;text-align:center;">21</div>
<div style="position:absolute;top:929.8px;height:18px;line-height:18px;font-size:12.1px;font-weight:400;color:#33363f;white-space:nowrap;left:1845.5px;width:1000px;text-align:center;">2.059</div>
<div style="position:absolute;top:929.8px;height:18px;line-height:18px;font-size:12.1px;font-weight:400;color:#33363f;white-space:nowrap;left:1900px;width:1000px;text-align:center;">40.9</div>
<div style="position:absolute;left:2276px;top:954.6px;width:260px;height:33px;background:#eff3f7;"></div>
<div style="position:absolute;top:962.8px;height:18px;line-height:18px;font-size:12.1px;font-weight:400;color:#33363f;white-space:nowrap;left:1802.3000000000002px;width:1000px;text-align:center;">22</div>
<div style="position:absolute;top:962.8px;height:18px;line-height:18px;font-size:12.1px;font-weight:400;color:#33363f;white-space:nowrap;left:1845.5px;width:1000px;text-align:center;">2.159</div>
<div style="position:absolute;top:962.8px;height:18px;line-height:18px;font-size:12.1px;font-weight:400;color:#33363f;white-space:nowrap;left:1900px;width:1000px;text-align:center;">43.2</div>
<div style="position:absolute;top:995.8px;height:18px;line-height:18px;font-size:12.1px;font-weight:400;color:#33363f;white-space:nowrap;left:1802.3000000000002px;width:1000px;text-align:center;">23</div>
<div style="position:absolute;top:995.8px;height:18px;line-height:18px;font-size:12.1px;font-weight:400;color:#33363f;white-space:nowrap;left:1845.5px;width:1000px;text-align:center;">2.259</div>
<div style="position:absolute;top:995.8px;height:18px;line-height:18px;font-size:12.1px;font-weight:400;color:#33363f;white-space:nowrap;left:1900px;width:1000px;text-align:center;">27.1</div>
<div style="position:absolute;left:2276px;top:1020.6px;width:260px;height:33px;background:#eff3f7;"></div>
<div style="position:absolute;top:1028.8px;height:18px;line-height:18px;font-size:12.1px;font-weight:400;color:#33363f;white-space:nowrap;left:1802.3000000000002px;width:1000px;text-align:center;">24</div>
<div style="position:absolute;top:1028.8px;height:18px;line-height:18px;font-size:12.1px;font-weight:400;color:#33363f;white-space:nowrap;left:1845.5px;width:1000px;text-align:center;">2.359</div>
<div style="position:absolute;top:1028.8px;height:18px;line-height:18px;font-size:12.1px;font-weight:400;color:#33363f;white-space:nowrap;left:1900px;width:1000px;text-align:center;">43.2</div>
<div style="position:absolute;left:2545.5px;top:263px;width:4.5px;height:302px;background:#b8c3cf;border-radius:2.5px;"></div>
<div style="position:absolute;left:2276px;top:1201px;width:261px;height:33px;background:#d3dde6;border-radius:3px;"></div>
<div style="position:absolute;top:1207.0px;height:21px;line-height:21px;font-size:14px;font-weight:700;color:#22242b;white-space:nowrap;letter-spacing:-0.55px;left:2292px;">Мин: 27.1</div>
<div style="position:absolute;top:1207.0px;height:21px;line-height:21px;font-size:14px;font-weight:700;color:#22242b;white-space:nowrap;letter-spacing:0.1px;left:2384px;">Макс: 46.3</div>
<div style="position:absolute;top:1203.3px;height:21px;line-height:21px;font-size:14px;font-weight:700;color:#22242b;white-space:nowrap;letter-spacing:0.6px;left:2511.5px;">...</div>
<div style="position:absolute;left:2px;top:1236px;width:2560px;height:79px;background:#fff;box-shadow:0 -2px 12px rgba(0,0,0,0.07);"></div>
<div style="position:absolute;top:1257.0px;height:22px;line-height:22px;font-size:14.7px;font-weight:400;color:#7c8197;white-space:nowrap;letter-spacing:0.1px;left:25px;">Источник</div>
<div style="position:absolute;top:1272.5px;height:22px;line-height:22px;font-size:14.5px;font-weight:400;color:#7c8197;white-space:nowrap;letter-spacing:0.1px;left:25px;">сигнала</div>
<div class="btn" style="left:106px;top:1259px;width:34px;height:34px;border-color:#dde3ec;background:#f7f9fc;"></div>
<svg style="position:absolute;left:115px;top:1266px;overflow:visible" width="16" height="20" viewBox="0 0 16 20" fill="none"><path d="M3.4 6.2 L12.4 13.4 L7.5 17.2 V2.2 L12.4 6 L3.4 13.2" stroke="#b4b8c4" stroke-width="1.4" stroke-linejoin="miter" fill="none"/></svg>
<div class="btn" style="left:151px;top:1259px;width:34px;height:34px;border-color:#dde3ec;background:#f7f9fc;"></div>
<svg style="position:absolute;left:160px;top:1266px;overflow:visible" width="17" height="20" viewBox="0 0 17 20" fill="none"><g stroke="#b4b8c4" stroke-width="1.1" fill="none"><path d="M8.3 4 V15"/><path d="M4.6 9.2 V11.4 L8.3 12.8"/><path d="M11.8 8.6 V10.4 L8.3 11.2"/></g><path d="M8.3 2 L10.3 4.8 H6.3 Z" fill="#b4b8c4"/><circle cx="8.3" cy="17" r="2.1" fill="#b4b8c4"/><circle cx="4.6" cy="8.4" r="1.5" fill="#b4b8c4"/><rect x="10.4" y="6" width="2.8" height="2.8" rx="0.5" fill="#b4b8c4"/></svg>
<div style="position:absolute;left:197px;top:1259px;width:33px;height:34px;background:#0bb1fb;border-radius:2px;"></div>
<svg style="position:absolute;left:205px;top:1266px;overflow:visible" width="17" height="20" viewBox="0 0 17 20" fill="none"><g stroke="#fff" stroke-width="1" fill="none" stroke-linejoin="round"><path d="M2.4 2.3 H14.2 V14.4 A3.2 3.2 0 0 1 11 17.6 H2.4 Z"/><rect x="5.1" y="4.6" width="6.6" height="5.2" rx="1"/></g><path d="M6.2 12.2 V15 M4.8 13.6 H7.6" stroke="#fff" stroke-width="1.2"/><circle cx="10" cy="14.6" r="0.7" fill="#fff"/><circle cx="11.8" cy="12.8" r="0.7" fill="#fff"/></svg>
<div style="position:absolute;left:247px;top:1251px;width:1px;height:49px;background:#e1e4ea;"></div>
<div style="position:absolute;top:1257.0px;height:22px;line-height:22px;font-size:14.5px;font-weight:400;color:#7c8197;white-space:nowrap;letter-spacing:0.1px;left:265px;">Доп.</div>
<div style="position:absolute;top:1272.5px;height:22px;line-height:22px;font-size:14.5px;font-weight:400;color:#7c8197;white-space:nowrap;letter-spacing:0.1px;left:265px;">действия</div>
<div class="btn" style="left:346px;top:1259px;width:33px;height:34px;"></div>
<div class="btn" style="left:391px;top:1259px;width:33px;height:34px;"></div>
<div class="btn" style="left:436px;top:1259px;width:33px;height:34px;"></div>
<div class="btn" style="left:481px;top:1259px;width:33px;height:34px;"></div>
<svg style="position:absolute;left:351px;top:1265px;overflow:visible" width="23" height="22" viewBox="0 0 23 22" fill="none"><path d="M1.4 12.8 H5.4 L6.9 6.8 L11.1 19 L14.6 3.8 L17 12.8 H20.8" stroke="#596073" stroke-width="1.9" stroke-linecap="round" stroke-linejoin="round" fill="none"/></svg>
<svg style="position:absolute;left:396px;top:1265px;overflow:visible" width="23" height="22" viewBox="0 0 23 22" fill="none"><g stroke="#596073" stroke-width="1.9" fill="none" stroke-linecap="butt"><path d="M4.3 19.6 A9.6 9.6 0 1 1 18.1 19.6"/><circle cx="11.1" cy="13.4" r="2.2"/><path d="M12.7 11.8 L16 8.4" stroke-linecap="round"/></g></svg>
<svg style="position:absolute;left:443px;top:1265px;overflow:visible" width="20" height="22" viewBox="0 0 20 22" fill="none"><rect x="4.8" y="3.6" width="9.8" height="15.8" rx="0.6" stroke="#596073" stroke-width="2.1"/><path d="M9.7 6.2 V11.2 M7.2 8.7 H12.2" stroke="#596073" stroke-width="1.5"/><rect x="7.2" y="13" width="1.7" height="1.7" fill="#596073"/><rect x="10.6" y="13" width="1.7" height="1.7" fill="#596073"/></svg>
<svg style="position:absolute;left:487px;top:1266px;overflow:visible" width="22" height="20" viewBox="0 0 22 20" fill="none"><rect x="2.6" y="4.9" width="15" height="11.2" rx="2.6" stroke="#596073" stroke-width="1.35"/><path d="M17.9 7.4 H18.6 A1.4 1.4 0 0 1 20 8.8 V12.2 A1.4 1.4 0 0 1 18.6 13.6 H17.9" stroke="#596073" stroke-width="1.2"/><path d="M10.6 7.4 L8.4 10.8 H11.6 L9.4 14" stroke="#596073" stroke-width="1.1" stroke-linejoin="round" stroke-linecap="round"/></svg>
<div style="position:absolute;left:531px;top:1251px;width:1px;height:49px;background:#e1e4ea;"></div>
<div class="btn" style="left:1036px;top:1259px;width:34px;height:34px;"></div>
<svg style="position:absolute;left:1043px;top:1265px;overflow:visible" width="20" height="22" viewBox="0 0 20 22" fill="none"><g stroke="#596073" stroke-width="1.8" fill="none" stroke-linecap="round"><circle cx="10" cy="12.4" r="7"/><path d="M10 8.6 V12.6 L11.6 14.6" stroke-width="1.6"/><path d="M3.2 5.4 L6.4 3.2 M16.8 5.4 L13.6 3.2" stroke-width="1.6"/></g></svg>
<div style="position:absolute;left:1090px;top:1268px;width:17px;height:17px;background:#adb1bd;"></div>
<div style="position:absolute;left:1128px;top:1250.5px;width:50px;height:50px;background:#04b3fe;border-radius:50%;"></div>
<svg style="position:absolute;left:1140px;top:1263px;" width="26" height="26" viewBox="0 0 26 26" fill="none"><path d="M7.5 5.2 L21 13 L7.5 20.8 Z" fill="#fff" stroke="#fff" stroke-width="1" stroke-linejoin="round"/></svg>
<div style="position:absolute;top:1262.0px;height:24px;line-height:24px;font-size:15.8px;font-weight:400;color:#7c8197;white-space:nowrap;left:1200.5px;">00:06:359</div>
<svg style="position:absolute;left:1291.4px;top:1272.8px;overflow:visible" width="9.6" height="6.8" viewBox="0 0 9.6 6.8" fill="none"><path d="M0.8 1 L4.80 5.10 L8.80 1" stroke="#7c8197" stroke-width="2.1" stroke-linecap="round" stroke-linejoin="round"/></svg>
<div style="position:absolute;left:1815px;top:1251px;width:1px;height:49px;background:#e1e4ea;"></div>
<div style="position:absolute;top:1257.0px;height:22px;line-height:22px;font-size:14.5px;font-weight:400;color:#7c8197;white-space:nowrap;letter-spacing:0.1px;left:1833px;">Точки</div>
<div style="position:absolute;top:1272.5px;height:22px;line-height:22px;font-size:14.5px;font-weight:400;color:#7c8197;white-space:nowrap;letter-spacing:0.1px;left:1833px;">и диап.</div>
<div class="btn" style="left:1899px;top:1259px;width:33px;height:34px;"></div>
<div class="btn" style="left:1939px;top:1259px;width:33px;height:34px;"></div>
<div class="btn" style="left:1980px;top:1259px;width:33px;height:34px;"></div>
<div class="btn" style="left:2020px;top:1259px;width:33px;height:34px;"></div>
<div class="btn" style="left:2061px;top:1259px;width:33px;height:34px;"></div>
<div class="btn" style="left:2101px;top:1259px;width:33px;height:34px;"></div>
<svg style="position:absolute;left:1904px;top:1265px;overflow:visible" width="24" height="22" viewBox="0 0 24 22" fill="none"><g stroke="#596073" stroke-width="1.85" fill="none"><path d="M2.6 1.6 V19.6 M21 1.6 V19.6"/><path d="M2.6 3.6 C6.4 2.4 9 4.2 12.6 6.6 C15 8.2 17.6 6.8 21 3.2"/><path d="M2.6 17 H21"/></g><ellipse cx="12.3" cy="12" rx="3.4" ry="1.5" stroke="#596073" stroke-width="0.9"/><path d="M11.3 10.2 L12.3 9.3 L13.3 10.2 M11.3 13.8 L12.3 14.7 L13.3 13.8" stroke="#596073" stroke-width="0.8" fill="none"/></svg>
<svg style="position:absolute;left:1944px;top:1265px;overflow:visible" width="24" height="22" viewBox="0 0 24 22" fill="none"><g stroke="#596073" stroke-width="1.85" fill="none"><path d="M2.6 1.6 V19.6 M21 1.6 V19.6"/><path d="M2.6 3.6 C6.4 2.4 9 4.2 12.6 6.6 C15 8.2 17.6 6.8 21 3.2"/><path d="M2.6 17 H21"/></g><path d="M9 12.2 H15.4" stroke="#596073" stroke-width="1.8"/></svg>
<svg style="position:absolute;left:1985px;top:1265px;overflow:visible" width="24" height="22" viewBox="0 0 24 22" fill="none"><path d="M5.2 2.4 H19.6 V14.8 L12.4 20 L5.2 14.8 Z" stroke="#596073" stroke-width="1.7" stroke-linejoin="miter" fill="none"/><path d="M12.4 6.4 V13.4 M8.9 9.9 H15.9" stroke="#596073" stroke-width="2.3"/></svg>
<svg style="position:absolute;left:2025px;top:1265px;overflow:visible" width="24" height="22" viewBox="0 0 24 22" fill="none"><path d="M5.2 2.4 H19.6 V14.8 L12.4 20 L5.2 14.8 Z" stroke="#596073" stroke-width="1.7" stroke-linejoin="miter" fill="none"/><path d="M8.9 9.2 H15.9" stroke="#596073" stroke-width="2.3"/></svg>
<svg style="position:absolute;left:2066px;top:1264px;overflow:visible" width="24" height="24" viewBox="0 0 24 24" fill="none"><rect x="10.4" y="10.8" width="3.2" height="3.2" fill="#596073"/><path d="M12 3 V8.2 M12 16.6 V21.8 M2.4 12.4 H8 M16 12.4 H21.6" stroke="#596073" stroke-width="1.9"/></svg>
<svg style="position:absolute;left:2107px;top:1265px;overflow:visible" width="22" height="22" viewBox="0 0 22 22" fill="none"><g stroke="#596073" stroke-width="1.7" fill="none" stroke-linecap="round" stroke-linejoin="round"><path d="M3.6 5.2 H18.4"/><path d="M8.8 5 V2.6 H13.2 V5" stroke-width="1.3"/><path d="M5 7.4 V16.8 A2.4 2.4 0 0 0 7.4 19.2 H14.6 A2.4 2.4 0 0 0 17 16.8 V7.4"/><path d="M9.3 9.4 V15.8 M12.7 9.4 V15.8" stroke-linecap="butt" stroke-width="1.9"/></g></svg>
<div style="position:absolute;left:2152.5px;top:1251px;width:1px;height:49px;background:#e1e4ea;"></div>
<div style="position:absolute;top:1257.0px;height:22px;line-height:22px;font-size:14.5px;font-weight:400;color:#7c8197;white-space:nowrap;letter-spacing:-0.25px;left:2170px;">Работа</div>
<div style="position:absolute;top:1272.5px;height:22px;line-height:22px;font-size:14.5px;font-weight:400;color:#7c8197;white-space:nowrap;letter-spacing:-0.3px;left:2170px;">с файлами</div>
<div class="btn" style="left:2258px;top:1259px;width:113px;height:34px;"></div>
<svg style="position:absolute;left:2262px;top:1264px;overflow:visible" width="28" height="22" viewBox="0 0 28 22" fill="none"><g stroke="#596073" stroke-width="2.0" fill="none" stroke-linecap="round" stroke-linejoin="round"><path d="M10.6 5.2 A8.2 8.2 0 1 1 10.6 16.4"/><path d="M1.2 10.8 H18.6 M14.8 6.8 L18.8 10.8 L14.8 14.8"/></g></svg>
<div style="position:absolute;top:1266.3px;height:18px;line-height:18px;font-size:12px;font-weight:700;color:#5c6275;white-space:nowrap;letter-spacing:-0.1px;left:2295px;">Импорт</div>
<svg style="position:absolute;left:2352px;top:1272.3px;overflow:visible" width="9" height="6.5" viewBox="0 0 9 6.5" fill="none"><path d="M0.8 1 L4.50 4.80 L8.20 1" stroke="#4f5564" stroke-width="2.0" stroke-linecap="round" stroke-linejoin="round"/></svg>
<div class="btn" style="left:2382px;top:1259px;width:113px;height:34px;"></div>
<svg style="position:absolute;left:2386px;top:1264px;overflow:visible" width="28" height="22" viewBox="0 0 28 22" fill="none"><g stroke="#596073" stroke-width="2.0" fill="none" stroke-linecap="round" stroke-linejoin="round"><path d="M16 5.2 A8.2 8.2 0 1 0 16 16.4"/><path d="M8.4 10.8 H25 M21.2 6.8 L25.2 10.8 L21.2 14.8"/></g></svg>
<div style="position:absolute;top:1266.3px;height:18px;line-height:18px;font-size:12px;font-weight:700;color:#5c6275;white-space:nowrap;letter-spacing:-0.1px;left:2419px;">Экспорт</div>
<svg style="position:absolute;left:2476px;top:1272.3px;overflow:visible" width="9" height="6.5" viewBox="0 0 9 6.5" fill="none"><path d="M0.8 1 L4.50 4.80 L8.20 1" stroke="#4f5564" stroke-width="2.0" stroke-linecap="round" stroke-linejoin="round"/></svg>
<div class="btn" style="left:2506.5px;top:1259px;width:33.5px;height:34px;"></div>
<svg style="position:absolute;left:2512px;top:1265px;overflow:visible" width="22" height="22" viewBox="0 0 22 22" fill="none"><g stroke="#596073" stroke-width="1.7" fill="none" stroke-linejoin="round"><path d="M5.6 8.4 V3 H16.4 V8.4"/><path d="M5.6 16 H3 V10 A1.6 1.6 0 0 1 4.6 8.4 H17.4 A1.6 1.6 0 0 1 19 10 V16 H16.4"/><rect x="5.6" y="13.2" width="10.8" height="6.2"/></g><path d="M8 16.4 H14" stroke="#596073" stroke-width="1.2"/><rect x="15" y="10.4" width="1.8" height="1.2" fill="#596073"/></svg>
</div></body></html>
